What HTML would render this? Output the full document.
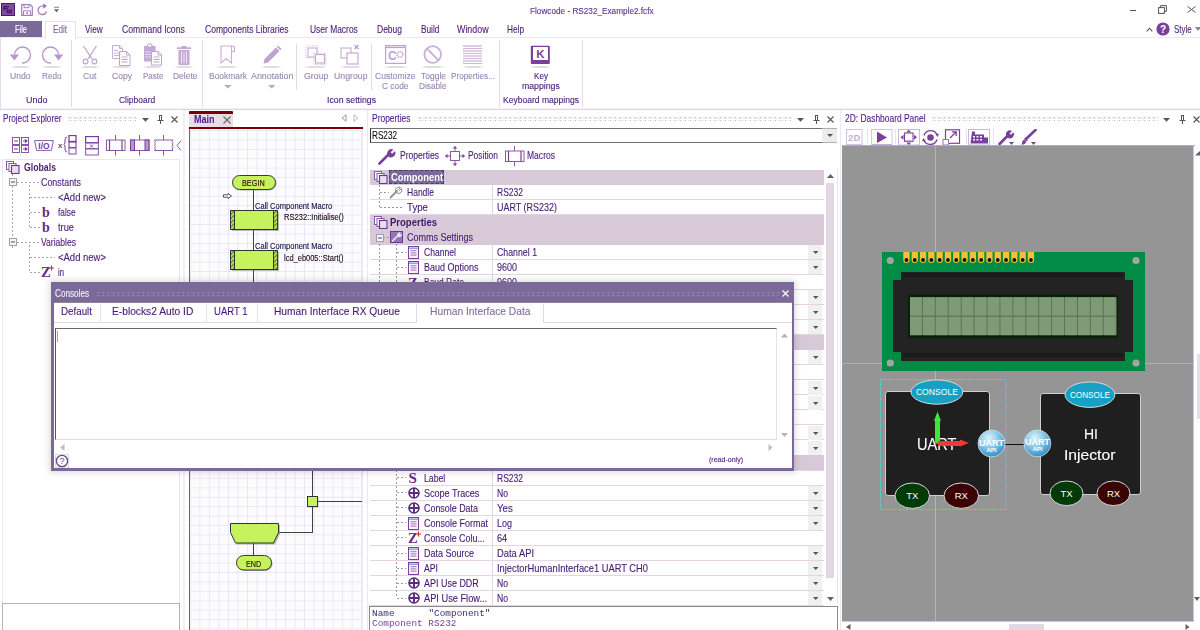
<!DOCTYPE html><html><head><meta charset="utf-8"><style>
html,body{margin:0;padding:0;width:1200px;height:630px;overflow:hidden;background:#fff;position:relative;font-family:"Liberation Sans", sans-serif}
.t{position:absolute;white-space:nowrap;line-height:1;transform-origin:0 0;-webkit-text-stroke:0.12px currentColor}
.r{position:absolute;box-sizing:border-box}
</style></head><body>
<svg class="r" style="left:1px;top:3px" width="14" height="13" viewBox="0 0 14 13"><rect x="0.5" y="0.5" width="13" height="12" fill="#7d4f9e" stroke="#4e1470"/><path d="M3 3.5h5M3 3.5v4M3 5.5h4M6 9.5h5M6 7.5v2M6 7.5h5" stroke="#4e1470" stroke-width="1.3" fill="none"/></svg>
<svg class="r" style="left:21px;top:4px" width="12" height="12" viewBox="0 0 12 12"><path d="M0.7 0.7h8.5l2.1 2.1v8.5h-10.6z" fill="none" stroke="#a87cc0" stroke-width="1.2"/><path d="M3 0.7v3h5v-3M2.5 11.3v-4.5h7v4.5" fill="none" stroke="#a87cc0" stroke-width="1"/><rect x="5" y="8" width="2" height="2" fill="#c0a0d0"/></svg>
<svg class="r" style="left:37px;top:3px" width="12" height="13" viewBox="0 0 12 13"><path d="M9.5 8.5A4.3 4.3 0 1 1 6.5 3.2" fill="none" stroke="#a87cc0" stroke-width="1.3"/><path d="M6.3 0.5l3.5 2.6-3.5 2.6z" fill="#9a64b4"/></svg>
<svg class="r" style="left:53px;top:6px" width="7" height="7" viewBox="0 0 7 7"><path d="M1 1.3h5" stroke="#777" stroke-width="0.9"/><path d="M0.8 3.3h5.4l-2.7 3z" fill="#666"/></svg>
<div class="t" style="transform:scaleX(0.965);left:529.5px;top:6.80px;font-size:8.5px;color:#5b3590;font-weight:normal;font-family:'Liberation Sans', sans-serif;">Flowcode - RS232_Example2.fcfx</div>
<div class="r" style="left:1129.5px;top:10.2px;width:6px;height:1.2px;background:#555;"></div>
<svg class="r" style="left:1158px;top:5px" width="9" height="9" viewBox="0 0 9 9"><rect x="0.6" y="2.6" width="5.8" height="5.8" fill="#fff" stroke="#555" stroke-width="1"/><path d="M2.6 2.6v-2h5.8v5.8h-2" fill="none" stroke="#555" stroke-width="1"/></svg>
<svg class="r" style="left:1187px;top:5.5px" width="9" height="7" viewBox="0 0 9 7"><path d="M0.5 0.5l8 6M8.5 0.5l-8 6" stroke="#555" stroke-width="1"/></svg>
<div class="r" style="left:0px;top:21px;width:42px;height:16.5px;background:#7b6a99;"></div>
<div class="t" style="transform:scaleX(0.709);left:15.4px;top:24.11px;font-size:10.5px;color:#fff;font-weight:normal;font-family:'Liberation Sans', sans-serif;">File</div>
<div class="t" style="transform:scaleX(0.780);left:85px;top:24.11px;font-size:10.5px;color:#4c1c7c;font-weight:normal;font-family:'Liberation Sans', sans-serif;">View</div>
<div class="t" style="transform:scaleX(0.821);left:121.6px;top:24.11px;font-size:10.5px;color:#4c1c7c;font-weight:normal;font-family:'Liberation Sans', sans-serif;">Command Icons</div>
<div class="t" style="transform:scaleX(0.814);left:205.4px;top:24.11px;font-size:10.5px;color:#4c1c7c;font-weight:normal;font-family:'Liberation Sans', sans-serif;">Components Libraries</div>
<div class="t" style="transform:scaleX(0.803);left:309.6px;top:24.11px;font-size:10.5px;color:#4c1c7c;font-weight:normal;font-family:'Liberation Sans', sans-serif;">User Macros</div>
<div class="t" style="transform:scaleX(0.808);left:377px;top:24.11px;font-size:10.5px;color:#4c1c7c;font-weight:normal;font-family:'Liberation Sans', sans-serif;">Debug</div>
<div class="t" style="transform:scaleX(0.788);left:420.6px;top:24.11px;font-size:10.5px;color:#4c1c7c;font-weight:normal;font-family:'Liberation Sans', sans-serif;">Build</div>
<div class="t" style="transform:scaleX(0.846);left:457.4px;top:24.11px;font-size:10.5px;color:#4c1c7c;font-weight:normal;font-family:'Liberation Sans', sans-serif;">Window</div>
<div class="t" style="transform:scaleX(0.787);left:507px;top:24.11px;font-size:10.5px;color:#4c1c7c;font-weight:normal;font-family:'Liberation Sans', sans-serif;">Help</div>
<svg class="r" style="left:1146px;top:26.5px" width="7" height="5" viewBox="0 0 7 5"><path d="M0.7 4.3L3.5 1.2 6.3 4.3" fill="none" stroke="#555" stroke-width="1.1"/></svg>
<svg class="r" style="left:1155.5px;top:21.5px" width="14" height="14" viewBox="0 0 14 14"><circle cx="7" cy="7" r="6.6" fill="#7b3f9b"/><text x="7" y="11" font-size="10" font-weight="bold" text-anchor="middle" fill="#fff" font-family="Liberation Sans">?</text></svg>
<div class="t" style="transform:scaleX(0.750);left:1174px;top:24.11px;font-size:10.5px;color:#4c1c7c;font-weight:normal;font-family:'Liberation Sans', sans-serif;">Style</div>
<svg class="r" style="left:1195px;top:27px" width="5" height="5" viewBox="0 0 5 5"><path d="M0 0h6l-3 4z" fill="#888"/></svg>
<div class="r" style="left:0px;top:37px;width:1200px;height:1px;background:#ede8ef;"></div>
<div class="r" style="left:0px;top:109px;width:1200px;height:1px;background:#e0d4e4;"></div>
<div class="r" style="left:0px;top:108px;width:1200px;height:1px;background:#f4f0f5;"></div>
<div class="r" style="left:0px;top:37px;width:1px;height:72px;background:#e6dee9;"></div>
<div class="r" style="left:44.5px;top:21px;width:31px;height:17.5px;background:#fff;border:1px solid #e8e0ec;border-bottom:none"></div>
<div class="t" style="transform:scaleX(0.774);left:52.9px;top:24.11px;font-size:10.5px;color:#7a6a9a;font-weight:normal;font-family:'Liberation Sans', sans-serif;">Edit</div>
<div class="r" style="left:70.5px;top:39.5px;width:1px;height:67px;background:#e4dae8;"></div>
<div class="r" style="left:202.4px;top:39.5px;width:1px;height:67px;background:#e4dae8;"></div>
<div class="r" style="left:499.3px;top:39.5px;width:1px;height:67px;background:#e4dae8;"></div>
<div class="r" style="left:581.7px;top:39.5px;width:1px;height:67px;background:#e4dae8;"></div>
<div class="r" style="left:296.4px;top:44px;width:1px;height:46px;background:#e4dae8;"></div>
<div class="r" style="left:370.5px;top:44px;width:1px;height:46px;background:#e4dae8;"></div>
<svg class="r" style="left:8px;top:45px" width="24" height="20" viewBox="0 0 24 20"><path d="M14 18A8 8 0 1 0 6.5 9.5" fill="none" stroke="#b898cc" stroke-width="1.4"/><path d="M1.8 9.5h9.2l-4.6 6z" fill="#b898cc"/></svg>
<svg class="r" style="left:40.8px;top:45px" width="24" height="20" viewBox="0 0 24 20"><path d="M10 18A8 8 0 1 1 17.5 9.5" fill="none" stroke="#b898cc" stroke-width="1.4"/><path d="M13 9.5h9.2l-4.6 6z" fill="#b898cc"/></svg>
<div class="r" style="left:10.5px;top:66px;width:20.5px;height:2px;background:linear-gradient(90deg,rgba(200,200,200,0),rgba(200,200,200,.6) 25%,rgba(200,200,200,.6) 75%,rgba(200,200,200,0));border-radius:1px;filter:blur(.4px)"></div>
<div class="r" style="left:42px;top:66px;width:20px;height:2px;background:linear-gradient(90deg,rgba(200,200,200,0),rgba(200,200,200,.6) 25%,rgba(200,200,200,.6) 75%,rgba(200,200,200,0));border-radius:1px;filter:blur(.4px)"></div>
<div class="t" style="transform:scaleX(1.013);left:10.4px;top:71.80px;font-size:8.5px;color:#9a88b4;font-weight:normal;font-family:'Liberation Sans', sans-serif;">Undo</div>
<div class="t" style="transform:scaleX(0.959);left:42px;top:71.80px;font-size:8.5px;color:#9a88b4;font-weight:normal;font-family:'Liberation Sans', sans-serif;">Redo</div>
<div class="t" style="transform:scaleX(1.058);left:25.5px;top:95.80px;font-size:8.5px;color:#4c1c7c;font-weight:normal;font-family:'Liberation Sans', sans-serif;">Undo</div>
<svg class="r" style="left:81px;top:45px" width="18" height="21" viewBox="0 0 18 21"><path d="M2.5 1L11 14M15.5 1L7 14" fill="none" stroke="#c0a2d2" stroke-width="1.3"/><circle cx="4.5" cy="16.5" r="2.4" fill="none" stroke="#c0a2d2" stroke-width="1.1"/><circle cx="13.5" cy="16.5" r="2.4" fill="none" stroke="#c0a2d2" stroke-width="1.1"/></svg>
<svg class="r" style="left:110px;top:44px" width="22" height="23" viewBox="0 0 22 23"><path d="M2.5 1.5h7l3 3v10h-10z" fill="#fff" stroke="#c8aed8" stroke-width="1"/><path d="M9.5 1.5v3h3" fill="none" stroke="#c8aed8" stroke-width="1"/><path d="M4 6.5h4M4 9h5M4 11.5h5" stroke="#cbb3da" stroke-width="1"/><path d="M9.5 7.5h7l3.5 3.5v10.5h-10.5z" fill="#fff" stroke="#c0a2d2" stroke-width="1"/><path d="M16.5 7.5v3.5h3.5" fill="none" stroke="#c0a2d2" stroke-width="1"/><path d="M11.5 13h6M11.5 15.5h6M11.5 18h6" stroke="#c0a2d2" stroke-width="1"/></svg>
<svg class="r" style="left:142px;top:43px" width="22" height="24" viewBox="0 0 22 24"><rect x="2" y="3" width="11.5" height="15.5" fill="#c4a8d6"/><rect x="5.5" y="1" width="4.5" height="3" rx="1" fill="#fff" stroke="#c0a2d2" stroke-width="1"/><path d="M3 9h9.5M3 11.5h9.5M3 14h6.5" stroke="#e8dcf0" stroke-width="1"/><path d="M9.5 8.5h6.5l3.5 3.5v10h-10z" fill="#fff" stroke="#c0a2d2" stroke-width="1"/><path d="M16 8.5v3.5h3.5" fill="none" stroke="#c0a2d2" stroke-width="1"/><path d="M11.5 14h6M11.5 16.5h6M11.5 19h6" stroke="#c0a2d2" stroke-width="1"/></svg>
<svg class="r" style="left:176px;top:45px" width="16" height="21" viewBox="0 0 16 21"><path d="M1 3.2h14" stroke="#c4a8d6" stroke-width="1.8"/><rect x="5.5" y="1" width="5" height="2" fill="#c4a8d6"/><path d="M2.5 5h11v14q0 1-1 1h-9q-1 0-1-1z" fill="#c4a8d6"/><path d="M5.5 6.5v12M8 6.5v12M10.5 6.5v12" stroke="#f0e8f4" stroke-width="1"/></svg>
<div class="r" style="left:80px;top:66px;width:20px;height:2px;background:linear-gradient(90deg,rgba(200,200,200,0),rgba(200,200,200,.6) 25%,rgba(200,200,200,.6) 75%,rgba(200,200,200,0));border-radius:1px;filter:blur(.4px)"></div>
<div class="r" style="left:111px;top:66px;width:21px;height:2px;background:linear-gradient(90deg,rgba(200,200,200,0),rgba(200,200,200,.6) 25%,rgba(200,200,200,.6) 75%,rgba(200,200,200,0));border-radius:1px;filter:blur(.4px)"></div>
<div class="r" style="left:143px;top:66px;width:20px;height:2px;background:linear-gradient(90deg,rgba(200,200,200,0),rgba(200,200,200,.6) 25%,rgba(200,200,200,.6) 75%,rgba(200,200,200,0));border-radius:1px;filter:blur(.4px)"></div>
<div class="r" style="left:174px;top:66px;width:20px;height:2px;background:linear-gradient(90deg,rgba(200,200,200,0),rgba(200,200,200,.6) 25%,rgba(200,200,200,.6) 75%,rgba(200,200,200,0));border-radius:1px;filter:blur(.4px)"></div>
<div class="t" style="transform:scaleX(1.005);left:83px;top:71.80px;font-size:8.5px;color:#9a88b4;font-weight:normal;font-family:'Liberation Sans', sans-serif;">Cut</div>
<div class="t" style="transform:scaleX(1.008);left:112px;top:71.80px;font-size:8.5px;color:#9a88b4;font-weight:normal;font-family:'Liberation Sans', sans-serif;">Copy</div>
<div class="t" style="transform:scaleX(0.943);left:142.8px;top:71.80px;font-size:8.5px;color:#9a88b4;font-weight:normal;font-family:'Liberation Sans', sans-serif;">Paste</div>
<div class="t" style="transform:scaleX(0.997);left:172.5px;top:71.80px;font-size:8.5px;color:#9a88b4;font-weight:normal;font-family:'Liberation Sans', sans-serif;">Delete</div>
<div class="t" style="transform:scaleX(0.995);left:118.8px;top:95.80px;font-size:8.5px;color:#4c1c7c;font-weight:normal;font-family:'Liberation Sans', sans-serif;">Clipboard</div>
<svg class="r" style="left:219px;top:45px" width="17" height="20" viewBox="0 0 17 20"><path d="M2 1h10.5v17l-5.25-4.5L2 18z" fill="none" stroke="#c8aed8" stroke-width="1.1"/><path d="M12.5 1q3 0 3 2.5v3h-3" fill="none" stroke="#c8aed8" stroke-width="1.1"/></svg>
<svg class="r" style="left:262px;top:45px" width="20" height="20" viewBox="0 0 20 20"><path d="M1.5 18.5l1-4.5 11.5-11.5 3.5 3.5-11.5 11.5z" fill="#c0a2d2"/><path d="M14.8 1.7l1.2-1.2 3.5 3.5-1.2 1.2z" fill="#c0a2d2"/></svg>
<div class="r" style="left:216px;top:66px;width:22px;height:2px;background:linear-gradient(90deg,rgba(200,200,200,0),rgba(200,200,200,.6) 25%,rgba(200,200,200,.6) 75%,rgba(200,200,200,0));border-radius:1px;filter:blur(.4px)"></div>
<div class="r" style="left:261px;top:66px;width:21px;height:2px;background:linear-gradient(90deg,rgba(200,200,200,0),rgba(200,200,200,.6) 25%,rgba(200,200,200,.6) 75%,rgba(200,200,200,0));border-radius:1px;filter:blur(.4px)"></div>
<div class="t" style="transform:scaleX(0.993);left:208.7px;top:71.80px;font-size:8.5px;color:#9a88b4;font-weight:normal;font-family:'Liberation Sans', sans-serif;">Bookmark</div>
<div class="t" style="transform:scaleX(1.045);left:250.6px;top:71.80px;font-size:8.5px;color:#9a88b4;font-weight:normal;font-family:'Liberation Sans', sans-serif;">Annotation</div>
<svg class="r" style="left:224px;top:85.3px" width="8" height="4" viewBox="0 0 8 4"><path d="M0 0h7.5l-3.75 3.5z" fill="#b0b0b0"/></svg>
<svg class="r" style="left:268px;top:85.3px" width="8" height="4" viewBox="0 0 8 4"><path d="M0 0h7.5l-3.75 3.5z" fill="#b0b0b0"/></svg>
<svg class="r" style="left:305px;top:45px" width="22" height="20" viewBox="0 0 22 20"><rect x="0.8" y="0.8" width="12" height="12" fill="none" stroke="#d2bede" stroke-width="1" stroke-dasharray="1 1"/><rect x="3" y="3" width="9" height="9" fill="none" stroke="#c8aed8" stroke-width="1.1"/><rect x="8.8" y="8" width="12" height="11.5" fill="none" stroke="#d2bede" stroke-width="1" stroke-dasharray="1 1"/><rect x="10.5" y="9.5" width="9" height="8.5" fill="#fff" stroke="#c0a2d2" stroke-width="1.1"/></svg>
<svg class="r" style="left:340px;top:44px" width="22" height="21" viewBox="0 0 22 21"><rect x="1" y="4" width="10" height="10" fill="none" stroke="#c8aed8" stroke-width="1.1"/><rect x="7" y="9" width="11" height="11" fill="#fff" stroke="#c0a2d2" stroke-width="1.1"/><path d="M14.5 1l4 4M18.5 1l-4 4" stroke="#b898cc" stroke-width="1.2"/></svg>
<div class="r" style="left:304px;top:66px;width:23px;height:2px;background:linear-gradient(90deg,rgba(200,200,200,0),rgba(200,200,200,.6) 25%,rgba(200,200,200,.6) 75%,rgba(200,200,200,0));border-radius:1px;filter:blur(.4px)"></div>
<div class="r" style="left:340px;top:66px;width:22px;height:2px;background:linear-gradient(90deg,rgba(200,200,200,0),rgba(200,200,200,.6) 25%,rgba(200,200,200,.6) 75%,rgba(200,200,200,0));border-radius:1px;filter:blur(.4px)"></div>
<div class="t" style="transform:scaleX(1.037);left:303.6px;top:71.80px;font-size:8.5px;color:#9a88b4;font-weight:normal;font-family:'Liberation Sans', sans-serif;">Group</div>
<div class="t" style="transform:scaleX(1.027);left:333.5px;top:71.80px;font-size:8.5px;color:#9a88b4;font-weight:normal;font-family:'Liberation Sans', sans-serif;">Ungroup</div>
<div class="t" style="transform:scaleX(1.027);left:327px;top:95.80px;font-size:8.5px;color:#4c1c7c;font-weight:normal;font-family:'Liberation Sans', sans-serif;">Icon settings</div>
<svg class="r" style="left:385px;top:45px" width="22" height="19" viewBox="0 0 22 19"><rect x="0.6" y="0.6" width="20" height="17.8" fill="#fff" stroke="#c0a2d2" stroke-width="1.2"/><path d="M0.6 2.4h20" stroke="#c0a2d2" stroke-width="1.4"/><text x="3" y="14.5" font-size="12" font-weight="bold" fill="#c0a2d2" font-family="Liberation Sans">C</text><circle cx="15" cy="9.5" r="2.8" fill="none" stroke="#c0a2d2" stroke-width="1.6" stroke-dasharray="1.1 .7"/></svg>
<svg class="r" style="left:422px;top:45px" width="22" height="19" viewBox="0 0 22 19"><circle cx="10.7" cy="9.5" r="8.3" fill="none" stroke="#c8aed8" stroke-width="1.8"/><path d="M5 3.6l11.5 11.8" stroke="#c8aed8" stroke-width="1.8"/></svg>
<svg class="r" style="left:463px;top:45px" width="20" height="20" viewBox="0 0 20 20"><path d="M0 1h19" stroke="#c8aed8" stroke-width="1.2"/><path d="M0 3.5h19" stroke="#c8aed8" stroke-width="0.9"/><path d="M0 6h19" stroke="#c8aed8" stroke-width="1.2"/><path d="M0 8.5h19" stroke="#c8aed8" stroke-width="0.9"/><path d="M0 11h19" stroke="#c8aed8" stroke-width="1.2"/><path d="M0 13.5h19" stroke="#c8aed8" stroke-width="0.9"/><path d="M0 16h19" stroke="#c8aed8" stroke-width="1.2"/><path d="M0 18.5h19" stroke="#c8aed8" stroke-width="0.9"/></svg>
<div class="r" style="left:384px;top:66px;width:24px;height:2px;background:linear-gradient(90deg,rgba(200,200,200,0),rgba(200,200,200,.6) 25%,rgba(200,200,200,.6) 75%,rgba(200,200,200,0));border-radius:1px;filter:blur(.4px)"></div>
<div class="r" style="left:421px;top:66px;width:24px;height:2px;background:linear-gradient(90deg,rgba(200,200,200,0),rgba(200,200,200,.6) 25%,rgba(200,200,200,.6) 75%,rgba(200,200,200,0));border-radius:1px;filter:blur(.4px)"></div>
<div class="r" style="left:462px;top:66px;width:22px;height:2px;background:linear-gradient(90deg,rgba(200,200,200,0),rgba(200,200,200,.6) 25%,rgba(200,200,200,.6) 75%,rgba(200,200,200,0));border-radius:1px;filter:blur(.4px)"></div>
<div class="t" style="transform:scaleX(1.009);left:375px;top:71.80px;font-size:8.5px;color:#9a88b4;font-weight:normal;font-family:'Liberation Sans', sans-serif;">Customize</div>
<div class="t" style="transform:scaleX(0.984);left:382.3px;top:81.80px;font-size:8.5px;color:#9a88b4;font-weight:normal;font-family:'Liberation Sans', sans-serif;">C code</div>
<div class="t" style="transform:scaleX(0.998);left:421px;top:71.80px;font-size:8.5px;color:#9a88b4;font-weight:normal;font-family:'Liberation Sans', sans-serif;">Toggle</div>
<div class="t" style="transform:scaleX(0.970);left:419px;top:81.80px;font-size:8.5px;color:#9a88b4;font-weight:normal;font-family:'Liberation Sans', sans-serif;">Disable</div>
<div class="t" style="transform:scaleX(0.960);left:451px;top:71.80px;font-size:8.5px;color:#9a88b4;font-weight:normal;font-family:'Liberation Sans', sans-serif;">Properties...</div>
<svg class="r" style="left:530px;top:45px" width="21" height="20" viewBox="0 0 21 20"><rect x="0.8" y="0.8" width="19" height="18.2" rx="1" fill="#7b3f9b"/><rect x="3" y="2" width="15" height="13" fill="#fff"/><text x="10.5" y="13" font-size="11.5" font-weight="bold" text-anchor="middle" fill="#7b3f9b" font-family="Liberation Sans">K</text></svg>
<div class="r" style="left:530px;top:66px;width:21px;height:2px;background:linear-gradient(90deg,rgba(200,200,200,0),rgba(200,200,200,.6) 25%,rgba(200,200,200,.6) 75%,rgba(200,200,200,0));border-radius:1px;filter:blur(.4px)"></div>
<div class="t" style="transform:scaleX(0.955);left:534.3px;top:71.80px;font-size:8.5px;color:#4c1c7c;font-weight:normal;font-family:'Liberation Sans', sans-serif;">Key</div>
<div class="t" style="transform:scaleX(1.026);left:522px;top:81.80px;font-size:8.5px;color:#4c1c7c;font-weight:normal;font-family:'Liberation Sans', sans-serif;">mappings</div>
<div class="t" style="transform:scaleX(1.005);left:502.8px;top:95.80px;font-size:8.5px;color:#4c1c7c;font-weight:normal;font-family:'Liberation Sans', sans-serif;">Keyboard mappings</div>
<div class="r" style="left:183px;top:110px;width:2px;height:520px;background:#f3eff4;"></div>
<div class="r" style="left:367px;top:110px;width:1px;height:520px;background:#ece6ee;"></div>
<div class="r" style="left:840px;top:110px;width:1px;height:520px;background:#ece6ee;"></div>
<div class="t" style="transform:scaleX(0.783);left:3px;top:113.11px;font-size:10.5px;color:#56208a;font-weight:normal;font-family:'Liberation Sans', sans-serif;">Project Explorer</div>
<svg class="r" style="left:67px;top:117px" width="70" height="5" viewBox="0 0 70 5"><defs><pattern id="g1" width="5" height="5" patternUnits="userSpaceOnUse"><rect x="1" y="0" width="1" height="1" fill="#d8d8d8"/><rect x="3" y="0" width="1" height="1" fill="#a8a8a8"/><rect x="2" y="1" width="1" height="1" fill="#dcdcdc"/><rect x="4" y="1" width="1" height="1" fill="#e4e4e4"/><rect x="1" y="3" width="1" height="1" fill="#e0e0e0"/><rect x="3" y="3" width="1" height="1" fill="#b8b8b8"/></pattern></defs><rect width="70" height="5" fill="url(#g1)"/></svg>
<svg class="r" style="left:142px;top:118px" width="7" height="4" viewBox="0 0 7 4"><path d="M0 0h7l-3.5 3.8z" fill="#555"/></svg>
<svg class="r" style="left:157px;top:115px" width="7" height="9" viewBox="0 0 7 9"><path d="M2 0.5h3M2.5 0.5v5M4.5 0.5v5M0.5 5.5h6M3.5 5.5v3.5" stroke="#555" stroke-width="1" fill="none"/></svg>
<svg class="r" style="left:171px;top:116px" width="7" height="7" viewBox="0 0 7 7"><path d="M0.5 0.5l6 6M6.5 0.5l-6 6" stroke="#555" stroke-width="1.1"/></svg>
<svg class="r" style="left:12px;top:137px" width="17" height="16" viewBox="0 0 17 16"><g fill="none" stroke="#8a5aaa" stroke-width="1"><rect x="0.5" y="0.5" width="7" height="7"/><rect x="9.5" y="0.5" width="7" height="7"/><rect x="0.5" y="8.5" width="7" height="7"/><rect x="9.5" y="8.5" width="7" height="7"/></g><path d="M2 4h4M11 4h4M13 2.5l2 1.5-2 1.5M2 12h4M11 12h4M13 10.5l2 1.5-2 1.5" stroke="#7b3f9b" stroke-width="1.1" fill="none"/></svg>
<svg class="r" style="left:34px;top:140px" width="20" height="11" viewBox="0 0 20 11"><path d="M0.6 0.6h18.8l-2 9.8h-14.8z" fill="none" stroke="#8a5aaa" stroke-width="1"/><text x="10" y="8.8" font-size="8.5" font-weight="bold" text-anchor="middle" fill="#7b3f9b" font-family="Liberation Sans">I/O</text></svg>
<svg class="r" style="left:58px;top:135px" width="20" height="20" viewBox="0 0 20 20"><text x="0" y="13" font-size="8" font-weight="bold" fill="#7b3f9b" font-family="Liberation Sans">x</text><path d="M9 2q-2 0-2 3v3l-1 1.5 1 1.5v3q0 3 2 3" fill="none" stroke="#7b3f9b" stroke-width="1"/><rect x="11" y="0.5" width="7" height="6" fill="none" stroke="#7b3f9b" stroke-width="1.3"/><rect x="11" y="7" width="7" height="5.5" fill="none" stroke="#7b3f9b" stroke-width="1.1"/><rect x="11" y="13" width="7" height="6" fill="none" stroke="#8a5aaa" stroke-width="1.1"/></svg>
<svg class="r" style="left:85px;top:136px" width="14" height="20" viewBox="0 0 14 20"><rect x="0.6" y="0.6" width="12.8" height="6" fill="none" stroke="#7b3f9b" stroke-width="1.2"/><rect x="0.6" y="7" width="12.8" height="5.5" fill="none" stroke="#8a5aaa" stroke-width="1"/><path d="M5 8.5l3 3M8 8.5l-3 3" stroke="#7b3f9b" stroke-width=".9"/><rect x="0.6" y="13" width="12.8" height="6" fill="none" stroke="#8a5aaa" stroke-width="1"/></svg>
<svg class="r" style="left:106px;top:135px" width="20" height="21" viewBox="0 0 20 21"><path d="M9.5 0v5M9.5 15.5v5" stroke="#8a5aaa" stroke-width="1"/><rect x="0.5" y="5" width="18.5" height="10.5" fill="none" stroke="#8a5aaa" stroke-width="1"/><path d="M3.5 5v10.5M16 5v10.5" stroke="#7b3f9b" stroke-width="1.2"/></svg>
<svg class="r" style="left:130px;top:135px" width="20" height="21" viewBox="0 0 20 21"><path d="M9.5 0v5M9.5 15.5v5" stroke="#8a5aaa" stroke-width="1"/><rect x="0.5" y="5" width="18.5" height="10.5" fill="none" stroke="#8a5aaa" stroke-width="1"/><rect x="0.5" y="5" width="4" height="10.5" fill="#b898cc" stroke="#7b3f9b" stroke-width="1"/><rect x="15" y="5" width="4" height="10.5" fill="#b898cc" stroke="#7b3f9b" stroke-width="1"/></svg>
<svg class="r" style="left:154px;top:135px" width="20" height="21" viewBox="0 0 20 21"><path d="M9.5 0v5M9.5 15.5v5" stroke="#8a5aaa" stroke-width="1"/><path d="M0.5 5h18.5M0.5 15.5h18.5M0.5 5q2 1.3 0 2.6q2 1.3 0 2.6q2 1.3 0 2.6q2 1.3 0 2.6M19 5q-2 1.3 0 2.6q-2 1.3 0 2.6q-2 1.3 0 2.6q-2 1.3 0 2.6" fill="none" stroke="#8a5aaa" stroke-width="1"/></svg>
<svg class="r" style="left:176px;top:140px" width="6" height="11" viewBox="0 0 6 11"><path d="M5 0.5L1 5.5 5 10.5" fill="none" stroke="#8a5aaa" stroke-width="1"/></svg>
<div class="r" style="left:2px;top:159px;width:178px;height:1px;background:#ebe6ec;"></div>
<div class="r" style="left:2px;top:159px;width:1px;height:444px;background:#ebe6ec;"></div>
<div class="r" style="left:179px;top:159px;width:1px;height:444px;background:#ebe6ec;"></div>
<div class="r" style="left:2px;top:603px;width:178px;height:27px;background:#fff;border:1px solid #b8b0bc;border-bottom:none"></div>
<svg class="r" style="left:6px;top:161px" width="14" height="13" viewBox="0 0 14 13"><rect x="0.5" y="0.5" width="7" height="8" fill="#fff" stroke="#8a5aaa" stroke-width="1"/><rect x="3" y="2.5" width="7" height="8" fill="#fff" stroke="#8a5aaa" stroke-width="1"/><rect x="5.5" y="4.5" width="7.5" height="8" fill="#eadcf2" stroke="#6a3590" stroke-width="1.1"/></svg>
<div class="t" style="transform:scaleX(0.831);left:24px;top:162.11px;font-size:10.5px;color:#4a1f70;font-weight:bold;font-family:'Liberation Sans', sans-serif;-webkit-text-stroke:0;">Globals</div>
<div class="r" style="left:12px;top:174px;width:1px;height:66px;background:repeating-linear-gradient(180deg,#a8a8a8 0 2px,transparent 2px 4px);"></div>
<div class="r" style="left:12px;top:246px;width:1px;height:2px;background:repeating-linear-gradient(180deg,#a8a8a8 0 2px,transparent 2px 4px);"></div>
<svg class="r" style="left:9px;top:178px" width="8" height="8" viewBox="0 0 8 8"><rect x="0.5" y="0.5" width="7" height="7" fill="#f4f4f4" stroke="#a0a0a0" stroke-width="1"/><path d="M2 4h4" stroke="#3050a0" stroke-width="1"/></svg>
<svg class="r" style="left:9px;top:238px" width="8" height="8" viewBox="0 0 8 8"><rect x="0.5" y="0.5" width="7" height="7" fill="#f4f4f4" stroke="#a0a0a0" stroke-width="1"/><path d="M2 4h4" stroke="#3050a0" stroke-width="1"/></svg>
<div class="r" style="left:17px;top:182px;width:22px;height:1px;background:repeating-linear-gradient(90deg,#a8a8a8 0 2px,transparent 2px 4px);"></div>
<div class="r" style="left:17px;top:242px;width:22px;height:1px;background:repeating-linear-gradient(90deg,#a8a8a8 0 2px,transparent 2px 4px);"></div>
<div class="r" style="left:29px;top:185px;width:1px;height:43px;background:repeating-linear-gradient(180deg,#a8a8a8 0 2px,transparent 2px 4px);"></div>
<div class="r" style="left:29px;top:245px;width:1px;height:28px;background:repeating-linear-gradient(180deg,#a8a8a8 0 2px,transparent 2px 4px);"></div>
<div class="r" style="left:30px;top:197px;width:25px;height:1px;background:repeating-linear-gradient(90deg,#a8a8a8 0 2px,transparent 2px 4px);"></div>
<div class="t" style="transform:scaleX(0.903);left:57.5px;top:192.11px;font-size:10.5px;color:#4a1c78;font-weight:normal;font-family:'Liberation Sans', sans-serif;">&lt;Add new&gt;</div>
<div class="r" style="left:30px;top:212px;width:10px;height:1px;background:repeating-linear-gradient(90deg,#a8a8a8 0 2px,transparent 2px 4px);"></div>
<svg class="r" style="left:42px;top:205px" width="10" height="13" viewBox="0 0 10 13"><text x="0" y="11.5" font-size="14" font-weight="bold" fill="#642c8c" font-family="Liberation Serif">b</text></svg>
<div class="t" style="transform:scaleX(0.789);left:57.5px;top:207.11px;font-size:10.5px;color:#4a1c78;font-weight:normal;font-family:'Liberation Sans', sans-serif;">false</div>
<div class="r" style="left:30px;top:227px;width:10px;height:1px;background:repeating-linear-gradient(90deg,#a8a8a8 0 2px,transparent 2px 4px);"></div>
<svg class="r" style="left:42px;top:220px" width="10" height="13" viewBox="0 0 10 13"><text x="0" y="11.5" font-size="14" font-weight="bold" fill="#642c8c" font-family="Liberation Serif">b</text></svg>
<div class="t" style="transform:scaleX(0.884);left:57.5px;top:222.11px;font-size:10.5px;color:#4a1c78;font-weight:normal;font-family:'Liberation Sans', sans-serif;">true</div>
<div class="r" style="left:30px;top:257px;width:25px;height:1px;background:repeating-linear-gradient(90deg,#a8a8a8 0 2px,transparent 2px 4px);"></div>
<div class="t" style="transform:scaleX(0.903);left:57.5px;top:252.11px;font-size:10.5px;color:#4a1c78;font-weight:normal;font-family:'Liberation Sans', sans-serif;">&lt;Add new&gt;</div>
<div class="r" style="left:30px;top:272px;width:10px;height:1px;background:repeating-linear-gradient(90deg,#a8a8a8 0 2px,transparent 2px 4px);"></div>
<svg class="r" style="left:41px;top:265px" width="14" height="13" viewBox="0 0 14 13"><text x="0" y="12" font-size="14.5" font-weight="bold" fill="#642c8c" font-family="Liberation Serif">Z</text><path d="M10.5 0.5v5M8 3h5" stroke="#e02020" stroke-width="1.1"/></svg>
<div class="t" style="transform:scaleX(0.733);left:57.5px;top:267.11px;font-size:10.5px;color:#4a1c78;font-weight:normal;font-family:'Liberation Sans', sans-serif;">in</div>
<div class="t" style="transform:scaleX(0.846);left:40.5px;top:177.11px;font-size:10.5px;color:#4a1c78;font-weight:normal;font-family:'Liberation Sans', sans-serif;">Constants</div>
<div class="t" style="transform:scaleX(0.814);left:40.5px;top:237.11px;font-size:10.5px;color:#4a1c78;font-weight:normal;font-family:'Liberation Sans', sans-serif;">Variables</div>
<div class="r" style="left:189px;top:111px;width:44px;height:3px;background:#7a0000;border-radius:1px 1px 0 0"></div>
<div class="r" style="left:189px;top:114px;width:44px;height:13px;background:#e6dde6;"></div>
<div class="t" style="transform:scaleX(0.857);left:194px;top:114.11px;font-size:10.5px;color:#4a1585;font-weight:bold;font-family:'Liberation Sans', sans-serif;-webkit-text-stroke:0;">Main</div>
<svg class="r" style="left:222.5px;top:116px" width="8" height="8" viewBox="0 0 8 8"><path d="M0.5 0.5l7 7M7.5 0.5l-7 7" stroke="#666" stroke-width="1.1"/></svg>
<svg class="r" style="left:341px;top:114px" width="6" height="8" viewBox="0 0 6 8"><path d="M5 0.8v6.4L1 4z" fill="none" stroke="#999" stroke-width="1"/></svg>
<svg class="r" style="left:353px;top:114px" width="6" height="8" viewBox="0 0 6 8"><path d="M1 0.8v6.4L5 4z" fill="none" stroke="#bbb" stroke-width="1"/></svg>
<div class="r" style="left:189px;top:127px;width:174px;height:2.2px;background:#7a0000;"></div>
<div class="r" style="left:189px;top:129px;width:173px;height:501px;background:#fcfcfc;background-image:linear-gradient(90deg,#e9e8fa 1px,transparent 1px),linear-gradient(180deg,#e9e8fa 1px,transparent 1px);background-size:9.53px 9.41px;background-position:0.9px 1px"></div>
<div class="r" style="left:189px;top:129px;width:1.2px;height:501px;background:#6a6a6a;"></div>
<div class="r" style="left:361.5px;top:129px;width:1px;height:501px;background:#e8e8f0;"></div>
<div class="r" style="left:253px;top:189px;width:1px;height:93px;background:#404040;"></div>
<div class="r" style="left:253px;top:542px;width:1px;height:13px;background:#404040;"></div>
<svg class="r" style="left:232px;top:175px" width="47" height="18" viewBox="0 0 47 18"><rect x="1.5" y="1.5" width="43" height="14" rx="7.0" fill="#777" opacity=".55"/><rect x="0.5" y="0.5" width="43" height="14" rx="7.0" fill="#c6f25e" stroke="#3a3a3a" stroke-width="1"/></svg>
<div class="t" style="transform:scaleX(0.858);left:241.8px;top:178.80px;font-size:8.5px;color:#300808;font-weight:normal;font-family:'Liberation Sans', sans-serif;">BEGIN</div>
<svg class="r" style="left:223px;top:193px" width="9" height="6" viewBox="0 0 9 6"><path d="M0.5 1.8h4.5v-1.3l3.5 2.5-3.5 2.5v-1.3h-4.5z" fill="#fff" stroke="#444" stroke-width=".9"/></svg>
<svg class="r" style="left:230px;top:210px" width="50" height="22" viewBox="0 0 50 22"><rect x="2" y="2" width="47" height="19" fill="#777" opacity=".5"/><rect x="0.5" y="0.5" width="47" height="19" fill="#c6f25e" stroke="#333" stroke-width="1"/><defs><pattern id="h210" width="3" height="3" patternUnits="userSpaceOnUse" patternTransform="rotate(45)"><rect width="1.3" height="3" fill="#5a7a2a"/></pattern></defs><rect x="1" y="1" width="3.5" height="18" fill="url(#h210)"/><path d="M4.5 0.5v19M43.5 0.5v19" stroke="#333" stroke-width="1"/><rect x="44" y="1" width="3.5" height="18" fill="url(#h210)"/></svg>
<svg class="r" style="left:230px;top:250px" width="50" height="22" viewBox="0 0 50 22"><rect x="2" y="2" width="47" height="19" fill="#777" opacity=".5"/><rect x="0.5" y="0.5" width="47" height="19" fill="#c6f25e" stroke="#333" stroke-width="1"/><defs><pattern id="h250" width="3" height="3" patternUnits="userSpaceOnUse" patternTransform="rotate(45)"><rect width="1.3" height="3" fill="#5a7a2a"/></pattern></defs><rect x="1" y="1" width="3.5" height="18" fill="url(#h250)"/><path d="M4.5 0.5v19M43.5 0.5v19" stroke="#333" stroke-width="1"/><rect x="44" y="1" width="3.5" height="18" fill="url(#h250)"/></svg>
<div class="t" style="transform:scaleX(0.888);left:254.8px;top:201.80px;font-size:8.5px;color:#10104a;font-weight:normal;font-family:'Liberation Sans', sans-serif;">Call Component Macro</div>
<div class="t" style="transform:scaleX(0.891);left:283.7px;top:212.80px;font-size:8.5px;color:#1a0818;font-weight:normal;font-family:'Liberation Sans', sans-serif;">RS232::Initialise()</div>
<div class="t" style="transform:scaleX(0.888);left:254.8px;top:241.80px;font-size:8.5px;color:#10104a;font-weight:normal;font-family:'Liberation Sans', sans-serif;">Call Component Macro</div>
<div class="t" style="transform:scaleX(0.880);left:284px;top:253.80px;font-size:8.5px;color:#1a0818;font-weight:normal;font-family:'Liberation Sans', sans-serif;">lcd_eb005::Start()</div>
<div class="r" style="left:312px;top:282px;width:1px;height:251px;background:#404040;"></div>
<div class="r" style="left:317px;top:501px;width:45px;height:1px;background:#404040;"></div>
<svg class="r" style="left:307px;top:496px" width="12" height="12" viewBox="0 0 12 12"><rect x="1.5" y="1.5" width="10" height="10" fill="#777" opacity=".5"/><rect x="0.5" y="0.5" width="10" height="10" fill="#c6f25e" stroke="#333" stroke-width="1"/></svg>
<div class="r" style="left:276px;top:532px;width:37px;height:1px;background:#404040;"></div>
<svg class="r" style="left:229.5px;top:522.5px" width="52" height="23" viewBox="0 0 52 23"><path d="M2 2h48v9l-5 10.5h-38l-5-10.5z" fill="#777" opacity=".5"/><path d="M0.5 0.5h48v9l-5 10.5h-38l-5-10.5z" fill="#c6f25e" stroke="#333" stroke-width="1"/></svg>
<svg class="r" style="left:235.7px;top:555px" width="39" height="18.5" viewBox="0 0 39 18.5"><rect x="1.5" y="1.5" width="35" height="14.5" rx="7.25" fill="#777" opacity=".55"/><rect x="0.5" y="0.5" width="35" height="14.5" rx="7.25" fill="#c6f25e" stroke="#3a3a3a" stroke-width="1"/></svg>
<div class="t" style="transform:scaleX(0.847);left:245.8px;top:559.80px;font-size:8.5px;color:#201008;font-weight:normal;font-family:'Liberation Sans', sans-serif;">END</div>
<div class="t" style="transform:scaleX(0.804);left:372px;top:113.11px;font-size:10.5px;color:#56208a;font-weight:normal;font-family:'Liberation Sans', sans-serif;">Properties</div>
<svg class="r" style="left:417px;top:117px" width="375" height="5" viewBox="0 0 375 5"><defs><pattern id="g2" width="5" height="5" patternUnits="userSpaceOnUse"><rect x="1" y="0" width="1" height="1" fill="#d8d8d8"/><rect x="3" y="0" width="1" height="1" fill="#a8a8a8"/><rect x="2" y="1" width="1" height="1" fill="#dcdcdc"/><rect x="4" y="1" width="1" height="1" fill="#e4e4e4"/><rect x="1" y="3" width="1" height="1" fill="#e0e0e0"/><rect x="3" y="3" width="1" height="1" fill="#b8b8b8"/></pattern></defs><rect width="375" height="5" fill="url(#g2)"/></svg>
<svg class="r" style="left:797px;top:118px" width="7" height="4" viewBox="0 0 7 4"><path d="M0 0h7l-3.5 3.8z" fill="#555"/></svg>
<svg class="r" style="left:812.5px;top:115px" width="7" height="9" viewBox="0 0 7 9"><path d="M2 0.5h3M2.5 0.5v5M4.5 0.5v5M0.5 5.5h6M3.5 5.5v3.5" stroke="#555" stroke-width="1" fill="none"/></svg>
<svg class="r" style="left:826.5px;top:116px" width="7" height="7" viewBox="0 0 7 7"><path d="M0.5 0.5l6 6M6.5 0.5l-6 6" stroke="#555" stroke-width="1.1"/></svg>
<div class="r" style="left:370px;top:128px;width:453px;height:15px;background:#fff;border-top:1.2px solid #707070;border-left:1.2px solid #303030;border-bottom:1px solid #707070"></div>
<div class="r" style="left:822px;top:128px;width:15px;height:15px;background:#ececec;border-top:1px solid #b0b0b0;border-bottom:1px solid #b0b0b0"></div>
<svg class="r" style="left:826.5px;top:134px" width="7" height="4" viewBox="0 0 7 4"><path d="M0 0h6l-3 3z" fill="#555"/></svg>
<div class="t" style="transform:scaleX(0.779);left:371.5px;top:130.11px;font-size:10.5px;color:#111;font-weight:normal;font-family:'Liberation Sans', sans-serif;">RS232</div>
<svg class="r" style="left:378px;top:147px" width="19" height="18" viewBox="0 0 19 18"><path d="M1.5 16.5l9.5-9.5" stroke="#7b3f9b" stroke-width="2.6" stroke-linecap="round"/><path d="M9.5 8.5a4.5 4.5 0 0 1 6-6l-2.8 2.8 1.5 1.5 2.8-2.8a4.5 4.5 0 0 1-6 6z" fill="#7b3f9b"/></svg>
<div class="t" style="transform:scaleX(0.815);left:400px;top:150.11px;font-size:10.5px;color:#4c1c7c;font-weight:normal;font-family:'Liberation Sans', sans-serif;">Properties</div>
<svg class="r" style="left:444.5px;top:146px" width="20" height="20" viewBox="0 0 20 20"><rect x="5.5" y="5.5" width="9" height="9" fill="#fff" stroke="#8a5aaa" stroke-width="1"/><path d="M10 0.5v5M10 14.5v5M0.5 10h5M14.5 10h5" stroke="#8a5aaa" stroke-width="1"/><path d="M10 0l-2.2 2.5h4.4zM10 20l-2.2-2.5h4.4zM0 10l2.5-2.2v4.4zM20 10l-2.5-2.2v4.4z" fill="#7b3f9b"/></svg>
<div class="t" style="transform:scaleX(0.803);left:468px;top:150.11px;font-size:10.5px;color:#4c1c7c;font-weight:normal;font-family:'Liberation Sans', sans-serif;">Position</div>
<svg class="r" style="left:505px;top:146px" width="20" height="21" viewBox="0 0 20 21"><path d="M9.5 0v5M9.5 15.5v5" stroke="#8a5aaa" stroke-width="1"/><rect x="0.5" y="5" width="18.5" height="10.5" fill="none" stroke="#8a5aaa" stroke-width="1"/><path d="M3.5 5v10.5M16 5v10.5" stroke="#7b3f9b" stroke-width="1.2"/></svg>
<div class="t" style="transform:scaleX(0.813);left:527px;top:150.11px;font-size:10.5px;color:#4c1c7c;font-weight:normal;font-family:'Liberation Sans', sans-serif;">Macros</div>
<div class="r" style="left:370px;top:169px;width:454px;height:436px;background:#fff;"></div>
<div class="r" style="left:370px;top:183.8px;width:454px;height:0.9px;background:#e4d4e6;"></div>
<div class="r" style="left:370px;top:198.84px;width:454px;height:0.9px;background:#e4d4e6;"></div>
<div class="r" style="left:370px;top:213.88px;width:454px;height:0.9px;background:#e4d4e6;"></div>
<div class="r" style="left:370px;top:228.92000000000002px;width:454px;height:0.9px;background:#e4d4e6;"></div>
<div class="r" style="left:370px;top:243.96px;width:454px;height:0.9px;background:#e4d4e6;"></div>
<div class="r" style="left:370px;top:259.0px;width:454px;height:0.9px;background:#e4d4e6;"></div>
<div class="r" style="left:370px;top:274.04px;width:454px;height:0.9px;background:#e4d4e6;"></div>
<div class="r" style="left:370px;top:289.08px;width:454px;height:0.9px;background:#e4d4e6;"></div>
<div class="r" style="left:370px;top:304.12px;width:454px;height:0.9px;background:#e4d4e6;"></div>
<div class="r" style="left:370px;top:319.16px;width:454px;height:0.9px;background:#e4d4e6;"></div>
<div class="r" style="left:370px;top:334.2px;width:454px;height:0.9px;background:#e4d4e6;"></div>
<div class="r" style="left:370px;top:349.24px;width:454px;height:0.9px;background:#e4d4e6;"></div>
<div class="r" style="left:370px;top:364.28000000000003px;width:454px;height:0.9px;background:#e4d4e6;"></div>
<div class="r" style="left:370px;top:379.32px;width:454px;height:0.9px;background:#e4d4e6;"></div>
<div class="r" style="left:370px;top:394.36px;width:454px;height:0.9px;background:#e4d4e6;"></div>
<div class="r" style="left:370px;top:409.40000000000003px;width:454px;height:0.9px;background:#e4d4e6;"></div>
<div class="r" style="left:370px;top:424.44px;width:454px;height:0.9px;background:#e4d4e6;"></div>
<div class="r" style="left:370px;top:439.47999999999996px;width:454px;height:0.9px;background:#e4d4e6;"></div>
<div class="r" style="left:370px;top:454.52px;width:454px;height:0.9px;background:#e4d4e6;"></div>
<div class="r" style="left:370px;top:469.56px;width:454px;height:0.9px;background:#e4d4e6;"></div>
<div class="r" style="left:370px;top:484.59999999999997px;width:454px;height:0.9px;background:#e4d4e6;"></div>
<div class="r" style="left:370px;top:499.64px;width:454px;height:0.9px;background:#e4d4e6;"></div>
<div class="r" style="left:370px;top:514.68px;width:454px;height:0.9px;background:#e4d4e6;"></div>
<div class="r" style="left:370px;top:529.7199999999999px;width:454px;height:0.9px;background:#e4d4e6;"></div>
<div class="r" style="left:370px;top:544.76px;width:454px;height:0.9px;background:#e4d4e6;"></div>
<div class="r" style="left:370px;top:559.8px;width:454px;height:0.9px;background:#e4d4e6;"></div>
<div class="r" style="left:370px;top:574.8399999999999px;width:454px;height:0.9px;background:#e4d4e6;"></div>
<div class="r" style="left:370px;top:589.8799999999999px;width:454px;height:0.9px;background:#e4d4e6;"></div>
<div class="r" style="left:370px;top:604.92px;width:454px;height:0.9px;background:#e4d4e6;"></div>
<div class="r" style="left:370px;top:169.5px;width:454px;height:15px;background:#d8c9d9;"></div>
<div class="r" style="left:370px;top:214.62px;width:454px;height:15px;background:#d8c9d9;"></div>
<div class="r" style="left:370px;top:229.66px;width:454px;height:15px;background:#d8c9d9;"></div>
<div class="r" style="left:370px;top:334.94px;width:454px;height:15px;background:#d8c9d9;"></div>
<div class="r" style="left:370px;top:455.26px;width:454px;height:15px;background:#d8c9d9;"></div>
<div class="r" style="left:492px;top:184.54px;width:1px;height:30px;background:#e4d4e6;"></div>
<div class="r" style="left:492px;top:244.7px;width:1px;height:90px;background:#e4d4e6;"></div>
<div class="r" style="left:492px;top:349.98px;width:1px;height:105px;background:#e4d4e6;"></div>
<div class="r" style="left:492px;top:470.29999999999995px;width:1px;height:135px;background:#e4d4e6;"></div>
<svg class="r" style="left:374px;top:170.5px" width="14" height="13" viewBox="0 0 14 13"><rect x="0.5" y="0.5" width="7" height="8" fill="#fff" stroke="#8a5aaa" stroke-width="1"/><rect x="3" y="2.5" width="7" height="8" fill="#fff" stroke="#8a5aaa" stroke-width="1"/><rect x="5.5" y="4.5" width="7.5" height="8" fill="#eadcf2" stroke="#6a3590" stroke-width="1.1"/></svg>
<div class="r" style="left:389px;top:170px;width:55px;height:14px;background:#7a6a9a;border:1px dashed #4a3a6a"></div>
<div class="t" style="transform:scaleX(0.892);left:391px;top:172.11px;font-size:10.5px;color:#fff;font-weight:bold;font-family:'Liberation Sans', sans-serif;-webkit-text-stroke:0;">Component</div>
<div class="r" style="left:379px;top:185px;width:1px;height:22px;background:repeating-linear-gradient(180deg,#999 0 2px,transparent 2px 4px);"></div>
<div class="r" style="left:380px;top:191.5px;width:9px;height:1px;background:repeating-linear-gradient(90deg,#999 0 2px,transparent 2px 4px);"></div>
<div class="r" style="left:380px;top:206.5px;width:24px;height:1px;background:repeating-linear-gradient(90deg,#999 0 2px,transparent 2px 4px);"></div>
<svg class="r" style="left:389px;top:186px" width="14" height="13" viewBox="0 0 14 13"><path d="M1.5 11.5l6.5-6.5" stroke="#909090" stroke-width="1.8" stroke-linecap="round"/><path d="M7 6a3.3 3.3 0 0 1 4.5-4.5l-2 2 1 1 2-2A3.3 3.3 0 0 1 8 7z" fill="none" stroke="#888" stroke-width="1"/></svg>
<div class="t" style="transform:scaleX(0.811);left:407.3px;top:187.11px;font-size:10.5px;color:#451a74;font-weight:normal;font-family:'Liberation Sans', sans-serif;">Handle</div>
<div class="t" style="transform:scaleX(0.810);left:497.3px;top:187.11px;font-size:10.5px;color:#451a74;font-weight:normal;font-family:'Liberation Sans', sans-serif;">RS232</div>
<div class="t" style="transform:scaleX(0.922);left:407.3px;top:202.11px;font-size:10.5px;color:#451a74;font-weight:normal;font-family:'Liberation Sans', sans-serif;">Type</div>
<div class="t" style="transform:scaleX(0.854);left:497.3px;top:202.11px;font-size:10.5px;color:#451a74;font-weight:normal;font-family:'Liberation Sans', sans-serif;">UART (RS232)</div>
<svg class="r" style="left:374px;top:215.5px" width="14" height="13" viewBox="0 0 14 13"><rect x="0.5" y="0.5" width="7" height="8" fill="#fff" stroke="#8a5aaa" stroke-width="1"/><rect x="3" y="2.5" width="7" height="8" fill="#fff" stroke="#8a5aaa" stroke-width="1"/><rect x="5.5" y="4.5" width="7.5" height="8" fill="#eadcf2" stroke="#6a3590" stroke-width="1.1"/></svg>
<div class="t" style="transform:scaleX(0.905);left:390px;top:217.11px;font-size:10.5px;color:#3c1a66;font-weight:bold;font-family:'Liberation Sans', sans-serif;-webkit-text-stroke:0;">Properties</div>
<svg class="r" style="left:376px;top:234px" width="8" height="8" viewBox="0 0 8 8"><rect x="0.5" y="0.5" width="7" height="7" fill="#f4f4f4" stroke="#a0a0a0" stroke-width="1"/><path d="M2 4h4" stroke="#3050a0" stroke-width="1"/></svg>
<div class="r" style="left:383px;top:237px;width:7px;height:1px;background:repeating-linear-gradient(90deg,#999 0 2px,transparent 2px 4px);"></div>
<svg class="r" style="left:390px;top:231px" width="13" height="12" viewBox="0 0 13 12"><rect x="0" y="0" width="13" height="12" fill="#9a72b8"/><rect x="0.5" y="0.5" width="12" height="11" fill="none" stroke="#6a3a8a"/><path d="M2.5 10l5.5-5.5" stroke="#eee" stroke-width="1.6" stroke-linecap="round"/><path d="M7.5 5a2.6 2.6 0 0 1 3.5-3.5l-1.5 1.5.8.8 1.5-1.5A2.6 2.6 0 0 1 8.3 5.8z" fill="#eee"/></svg>
<div class="t" style="transform:scaleX(0.857);left:407px;top:232.11px;font-size:10.5px;color:#451a74;font-weight:normal;font-family:'Liberation Sans', sans-serif;">Comms Settings</div>
<div class="r" style="left:379px;top:244px;width:1px;height:218px;background:repeating-linear-gradient(180deg,#999 0 2px,transparent 2px 4px);"></div>
<div class="r" style="left:396px;top:244px;width:1px;height:38px;background:repeating-linear-gradient(180deg,#999 0 2px,transparent 2px 4px);"></div>
<div class="r" style="left:396px;top:470px;width:1px;height:128px;background:repeating-linear-gradient(180deg,#999 0 2px,transparent 2px 4px);"></div>
<div class="r" style="left:397px;top:251.7px;width:9px;height:1px;background:repeating-linear-gradient(90deg,#999 0 2px,transparent 2px 4px);"></div>
<svg class="r" style="left:408px;top:246.2px" width="11" height="13" viewBox="0 0 11 13"><rect x="0.5" y="0.5" width="10" height="12" fill="#f8f4fa" stroke="#7b3f9b" stroke-width="1"/><path d="M1 2.2h9" stroke="#6aa0e0" stroke-width="1.3"/><path d="M2.5 4.7h6M2.5 6.9h6M2.5 9.1h6" stroke="#b08ac8" stroke-width="1.3"/></svg>
<div class="t" style="transform:scaleX(0.818);left:424px;top:247.31px;font-size:10.5px;color:#451a74;font-weight:normal;font-family:'Liberation Sans', sans-serif;">Channel</div>
<div class="t" style="transform:scaleX(0.836);left:497.3px;top:247.31px;font-size:10.5px;color:#451a74;font-weight:normal;font-family:'Liberation Sans', sans-serif;">Channel 1</div>
<div class="r" style="left:808px;top:245.2px;width:14px;height:14px;background:#f0f0f0;"></div>
<svg class="r" style="left:813px;top:251.2px" width="6" height="4" viewBox="0 0 6 4"><path d="M0 0h5.5l-2.75 3z" fill="#555"/></svg>
<div class="r" style="left:397px;top:266.74px;width:9px;height:1px;background:repeating-linear-gradient(90deg,#999 0 2px,transparent 2px 4px);"></div>
<svg class="r" style="left:408px;top:261.24px" width="11" height="13" viewBox="0 0 11 13"><rect x="0.5" y="0.5" width="10" height="12" fill="#f8f4fa" stroke="#7b3f9b" stroke-width="1"/><path d="M1 2.2h9" stroke="#6aa0e0" stroke-width="1.3"/><path d="M2.5 4.7h6M2.5 6.9h6M2.5 9.1h6" stroke="#b08ac8" stroke-width="1.3"/></svg>
<div class="t" style="transform:scaleX(0.855);left:424px;top:262.35px;font-size:10.5px;color:#451a74;font-weight:normal;font-family:'Liberation Sans', sans-serif;">Baud Options</div>
<div class="t" style="transform:scaleX(0.856);left:497.3px;top:262.35px;font-size:10.5px;color:#451a74;font-weight:normal;font-family:'Liberation Sans', sans-serif;">9600</div>
<div class="r" style="left:808px;top:260.24px;width:14px;height:14px;background:#f0f0f0;"></div>
<svg class="r" style="left:813px;top:266.24px" width="6" height="4" viewBox="0 0 6 4"><path d="M0 0h5.5l-2.75 3z" fill="#555"/></svg>
<div class="r" style="left:397px;top:281.78px;width:9px;height:1px;background:repeating-linear-gradient(90deg,#999 0 2px,transparent 2px 4px);"></div>
<svg class="r" style="left:408px;top:275.78px" width="14" height="13" viewBox="0 0 14 13"><text x="0" y="12" font-size="14.5" font-weight="bold" fill="#642c8c" font-family="Liberation Serif">Z</text></svg>
<div class="t" style="transform:scaleX(0.806);left:424px;top:277.39px;font-size:10.5px;color:#451a74;font-weight:normal;font-family:'Liberation Sans', sans-serif;">Baud Rate</div>
<div class="t" style="transform:scaleX(0.856);left:497.3px;top:277.39px;font-size:10.5px;color:#451a74;font-weight:normal;font-family:'Liberation Sans', sans-serif;">9600</div>
<div class="r" style="left:808px;top:290.32px;width:14px;height:14px;background:#f0f0f0;"></div>
<svg class="r" style="left:813px;top:296.32px" width="6" height="4" viewBox="0 0 6 4"><path d="M0 0h5.5l-2.75 3z" fill="#555"/></svg>
<div class="r" style="left:808px;top:305.36px;width:14px;height:14px;background:#f0f0f0;"></div>
<svg class="r" style="left:813px;top:311.36px" width="6" height="4" viewBox="0 0 6 4"><path d="M0 0h5.5l-2.75 3z" fill="#555"/></svg>
<div class="r" style="left:808px;top:320.4px;width:14px;height:14px;background:#f0f0f0;"></div>
<svg class="r" style="left:813px;top:326.4px" width="6" height="4" viewBox="0 0 6 4"><path d="M0 0h5.5l-2.75 3z" fill="#555"/></svg>
<div class="r" style="left:808px;top:350.48px;width:14px;height:14px;background:#f0f0f0;"></div>
<svg class="r" style="left:813px;top:356.48px" width="6" height="4" viewBox="0 0 6 4"><path d="M0 0h5.5l-2.75 3z" fill="#555"/></svg>
<div class="r" style="left:808px;top:380.56px;width:14px;height:14px;background:#f0f0f0;"></div>
<svg class="r" style="left:813px;top:386.56px" width="6" height="4" viewBox="0 0 6 4"><path d="M0 0h5.5l-2.75 3z" fill="#555"/></svg>
<div class="r" style="left:808px;top:395.6px;width:14px;height:14px;background:#f0f0f0;"></div>
<svg class="r" style="left:813px;top:401.6px" width="6" height="4" viewBox="0 0 6 4"><path d="M0 0h5.5l-2.75 3z" fill="#555"/></svg>
<div class="r" style="left:808px;top:425.67999999999995px;width:14px;height:14px;background:#f0f0f0;"></div>
<svg class="r" style="left:813px;top:431.67999999999995px" width="6" height="4" viewBox="0 0 6 4"><path d="M0 0h5.5l-2.75 3z" fill="#555"/></svg>
<div class="r" style="left:808px;top:440.71999999999997px;width:14px;height:14px;background:#f0f0f0;"></div>
<svg class="r" style="left:813px;top:446.71999999999997px" width="6" height="4" viewBox="0 0 6 4"><path d="M0 0h5.5l-2.75 3z" fill="#555"/></svg>
<div class="r" style="left:397px;top:477.29999999999995px;width:9px;height:1px;background:repeating-linear-gradient(90deg,#999 0 2px,transparent 2px 4px);"></div>
<svg class="r" style="left:408px;top:471.29999999999995px" width="12" height="13" viewBox="0 0 12 13"><text x="0.5" y="12" font-size="15" font-weight="bold" fill="#642c8c" font-family="Liberation Serif">S</text></svg>
<div class="t" style="transform:scaleX(0.825);left:424px;top:472.91px;font-size:10.5px;color:#451a74;font-weight:normal;font-family:'Liberation Sans', sans-serif;">Label</div>
<div class="t" style="transform:scaleX(0.810);left:497.3px;top:472.91px;font-size:10.5px;color:#451a74;font-weight:normal;font-family:'Liberation Sans', sans-serif;">RS232</div>
<div class="r" style="left:397px;top:492.34px;width:9px;height:1px;background:repeating-linear-gradient(90deg,#999 0 2px,transparent 2px 4px);"></div>
<svg class="r" style="left:407.5px;top:486.84px" width="12" height="12" viewBox="0 0 12 12"><circle cx="6" cy="6" r="5" fill="#fff" stroke="#5a2a80" stroke-width="1.6"/><path d="M6 1v10M1 6h10" stroke="#5a2a80" stroke-width="1.9"/></svg>
<div class="t" style="transform:scaleX(0.860);left:424px;top:487.95px;font-size:10.5px;color:#451a74;font-weight:normal;font-family:'Liberation Sans', sans-serif;">Scope Traces</div>
<div class="t" style="transform:scaleX(0.819);left:497.3px;top:487.95px;font-size:10.5px;color:#451a74;font-weight:normal;font-family:'Liberation Sans', sans-serif;">No</div>
<div class="r" style="left:808px;top:485.84px;width:14px;height:14px;background:#f0f0f0;"></div>
<svg class="r" style="left:813px;top:491.84px" width="6" height="4" viewBox="0 0 6 4"><path d="M0 0h5.5l-2.75 3z" fill="#555"/></svg>
<div class="r" style="left:397px;top:507.38px;width:9px;height:1px;background:repeating-linear-gradient(90deg,#999 0 2px,transparent 2px 4px);"></div>
<svg class="r" style="left:407.5px;top:501.88px" width="12" height="12" viewBox="0 0 12 12"><circle cx="6" cy="6" r="5" fill="#fff" stroke="#5a2a80" stroke-width="1.6"/><path d="M6 1v10M1 6h10" stroke="#5a2a80" stroke-width="1.9"/></svg>
<div class="t" style="transform:scaleX(0.849);left:424px;top:502.99px;font-size:10.5px;color:#451a74;font-weight:normal;font-family:'Liberation Sans', sans-serif;">Console Data</div>
<div class="t" style="transform:scaleX(0.922);left:497.3px;top:502.99px;font-size:10.5px;color:#451a74;font-weight:normal;font-family:'Liberation Sans', sans-serif;">Yes</div>
<div class="r" style="left:808px;top:500.88px;width:14px;height:14px;background:#f0f0f0;"></div>
<svg class="r" style="left:813px;top:506.88px" width="6" height="4" viewBox="0 0 6 4"><path d="M0 0h5.5l-2.75 3z" fill="#555"/></svg>
<div class="r" style="left:397px;top:522.42px;width:9px;height:1px;background:repeating-linear-gradient(90deg,#999 0 2px,transparent 2px 4px);"></div>
<svg class="r" style="left:408px;top:516.92px" width="11" height="13" viewBox="0 0 11 13"><rect x="0.5" y="0.5" width="10" height="12" fill="#f8f4fa" stroke="#7b3f9b" stroke-width="1"/><path d="M1 2.2h9" stroke="#6aa0e0" stroke-width="1.3"/><path d="M2.5 4.7h6M2.5 6.9h6M2.5 9.1h6" stroke="#b08ac8" stroke-width="1.3"/></svg>
<div class="t" style="transform:scaleX(0.857);left:424px;top:518.03px;font-size:10.5px;color:#451a74;font-weight:normal;font-family:'Liberation Sans', sans-serif;">Console Format</div>
<div class="t" style="transform:scaleX(0.856);left:497.3px;top:518.03px;font-size:10.5px;color:#451a74;font-weight:normal;font-family:'Liberation Sans', sans-serif;">Log</div>
<div class="r" style="left:808px;top:515.92px;width:14px;height:14px;background:#f0f0f0;"></div>
<svg class="r" style="left:813px;top:521.92px" width="6" height="4" viewBox="0 0 6 4"><path d="M0 0h5.5l-2.75 3z" fill="#555"/></svg>
<div class="r" style="left:397px;top:537.46px;width:9px;height:1px;background:repeating-linear-gradient(90deg,#999 0 2px,transparent 2px 4px);"></div>
<svg class="r" style="left:408px;top:531.46px" width="14" height="13" viewBox="0 0 14 13"><text x="0" y="12" font-size="14.5" font-weight="bold" fill="#642c8c" font-family="Liberation Serif">Z</text><path d="M10.5 0.5v5M8 3h5" stroke="#e02020" stroke-width="1.1"/></svg>
<div class="t" style="transform:scaleX(0.847);left:424px;top:533.07px;font-size:10.5px;color:#451a74;font-weight:normal;font-family:'Liberation Sans', sans-serif;">Console Colu...</div>
<div class="t" style="transform:scaleX(0.873);left:497.3px;top:533.07px;font-size:10.5px;color:#451a74;font-weight:normal;font-family:'Liberation Sans', sans-serif;">64</div>
<div class="r" style="left:397px;top:552.5px;width:9px;height:1px;background:repeating-linear-gradient(90deg,#999 0 2px,transparent 2px 4px);"></div>
<svg class="r" style="left:408px;top:547.0px" width="11" height="13" viewBox="0 0 11 13"><rect x="0.5" y="0.5" width="10" height="12" fill="#f8f4fa" stroke="#7b3f9b" stroke-width="1"/><path d="M1 2.2h9" stroke="#6aa0e0" stroke-width="1.3"/><path d="M2.5 4.7h6M2.5 6.9h6M2.5 9.1h6" stroke="#b08ac8" stroke-width="1.3"/></svg>
<div class="t" style="transform:scaleX(0.857);left:424px;top:548.11px;font-size:10.5px;color:#451a74;font-weight:normal;font-family:'Liberation Sans', sans-serif;">Data Source</div>
<div class="t" style="transform:scaleX(0.893);left:497.3px;top:548.11px;font-size:10.5px;color:#451a74;font-weight:normal;font-family:'Liberation Sans', sans-serif;">Data API</div>
<div class="r" style="left:808px;top:546.0px;width:14px;height:14px;background:#f0f0f0;"></div>
<svg class="r" style="left:813px;top:552.0px" width="6" height="4" viewBox="0 0 6 4"><path d="M0 0h5.5l-2.75 3z" fill="#555"/></svg>
<div class="r" style="left:397px;top:567.54px;width:9px;height:1px;background:repeating-linear-gradient(90deg,#999 0 2px,transparent 2px 4px);"></div>
<svg class="r" style="left:408px;top:562.04px" width="11" height="13" viewBox="0 0 11 13"><rect x="0.5" y="0.5" width="10" height="12" fill="#f8f4fa" stroke="#7b3f9b" stroke-width="1"/><path d="M1 2.2h9" stroke="#6aa0e0" stroke-width="1.3"/><path d="M2.5 4.7h6M2.5 6.9h6M2.5 9.1h6" stroke="#b08ac8" stroke-width="1.3"/></svg>
<div class="t" style="transform:scaleX(0.827);left:424px;top:563.15px;font-size:10.5px;color:#451a74;font-weight:normal;font-family:'Liberation Sans', sans-serif;">API</div>
<div class="t" style="transform:scaleX(0.888);left:497.3px;top:563.15px;font-size:10.5px;color:#451a74;font-weight:normal;font-family:'Liberation Sans', sans-serif;">InjectorHumanInterface1 UART CH0</div>
<div class="r" style="left:808px;top:561.04px;width:14px;height:14px;background:#f0f0f0;"></div>
<svg class="r" style="left:813px;top:567.04px" width="6" height="4" viewBox="0 0 6 4"><path d="M0 0h5.5l-2.75 3z" fill="#555"/></svg>
<div class="r" style="left:397px;top:582.5799999999999px;width:9px;height:1px;background:repeating-linear-gradient(90deg,#999 0 2px,transparent 2px 4px);"></div>
<svg class="r" style="left:407.5px;top:577.0799999999999px" width="12" height="12" viewBox="0 0 12 12"><circle cx="6" cy="6" r="5" fill="#fff" stroke="#5a2a80" stroke-width="1.6"/><path d="M6 1v10M1 6h10" stroke="#5a2a80" stroke-width="1.9"/></svg>
<div class="t" style="transform:scaleX(0.854);left:424px;top:578.19px;font-size:10.5px;color:#451a74;font-weight:normal;font-family:'Liberation Sans', sans-serif;">API Use DDR</div>
<div class="t" style="transform:scaleX(0.819);left:497.3px;top:578.19px;font-size:10.5px;color:#451a74;font-weight:normal;font-family:'Liberation Sans', sans-serif;">No</div>
<div class="r" style="left:808px;top:576.0799999999999px;width:14px;height:14px;background:#f0f0f0;"></div>
<svg class="r" style="left:813px;top:582.0799999999999px" width="6" height="4" viewBox="0 0 6 4"><path d="M0 0h5.5l-2.75 3z" fill="#555"/></svg>
<div class="r" style="left:397px;top:597.62px;width:9px;height:1px;background:repeating-linear-gradient(90deg,#999 0 2px,transparent 2px 4px);"></div>
<svg class="r" style="left:407.5px;top:592.12px" width="12" height="12" viewBox="0 0 12 12"><circle cx="6" cy="6" r="5" fill="#fff" stroke="#5a2a80" stroke-width="1.6"/><path d="M6 1v10M1 6h10" stroke="#5a2a80" stroke-width="1.9"/></svg>
<div class="t" style="transform:scaleX(0.880);left:424px;top:593.23px;font-size:10.5px;color:#451a74;font-weight:normal;font-family:'Liberation Sans', sans-serif;">API Use Flow...</div>
<div class="t" style="transform:scaleX(0.819);left:497.3px;top:593.23px;font-size:10.5px;color:#451a74;font-weight:normal;font-family:'Liberation Sans', sans-serif;">No</div>
<div class="r" style="left:808px;top:591.12px;width:14px;height:14px;background:#f0f0f0;"></div>
<svg class="r" style="left:813px;top:597.12px" width="6" height="4" viewBox="0 0 6 4"><path d="M0 0h5.5l-2.75 3z" fill="#555"/></svg>
<div class="r" style="left:825px;top:169px;width:13px;height:436px;background:#fff;"></div>
<div class="r" style="left:826px;top:183px;width:7.7px;height:395px;background:#e2d8e4;"></div>
<svg class="r" style="left:827px;top:174px" width="7" height="5" viewBox="0 0 7 5"><path d="M0 4h7l-3.5-4z" fill="#606060"/></svg>
<svg class="r" style="left:827px;top:597px" width="7" height="5" viewBox="0 0 7 5"><path d="M0 0h7l-3.5 4z" fill="#606060"/></svg>
<div class="r" style="left:836.5px;top:169px;width:1px;height:436px;background:#e8e4ea;"></div>
<div class="r" style="left:369px;top:605.5px;width:469px;height:25px;background:#fff;border-top:1.2px solid #8a8a8a;border-left:1.2px solid #8a8a8a;border-right:1.2px solid #8a8a8a"></div>
<div class="t" style="transform:scaleX(1.003);left:371.5px;top:609.29px;font-size:9.4px;color:#3a3070;font-weight:normal;font-family:'Liberation Mono', monospace;-webkit-text-stroke:0;">Name&nbsp;&nbsp;&nbsp;&nbsp;&nbsp;&nbsp;"Component"</div>
<div class="t" style="transform:scaleX(1.001);left:371.5px;top:619.29px;font-size:9.4px;color:#7a40a0;font-weight:normal;font-family:'Liberation Mono', monospace;-webkit-text-stroke:0;">Component RS232</div>
<div class="t" style="transform:scaleX(0.802);left:845px;top:113.11px;font-size:10.5px;color:#56208a;font-weight:normal;font-family:'Liberation Sans', sans-serif;">2D: Dashboard Panel</div>
<svg class="r" style="left:931px;top:117px" width="228" height="5" viewBox="0 0 228 5"><defs><pattern id="g3" width="5" height="5" patternUnits="userSpaceOnUse"><rect x="1" y="0" width="1" height="1" fill="#d8d8d8"/><rect x="3" y="0" width="1" height="1" fill="#a8a8a8"/><rect x="2" y="1" width="1" height="1" fill="#dcdcdc"/><rect x="4" y="1" width="1" height="1" fill="#e4e4e4"/><rect x="1" y="3" width="1" height="1" fill="#e0e0e0"/><rect x="3" y="3" width="1" height="1" fill="#b8b8b8"/></pattern></defs><rect width="228" height="5" fill="url(#g3)"/></svg>
<svg class="r" style="left:1163px;top:118px" width="7" height="4" viewBox="0 0 7 4"><path d="M0 0h7l-3.5 3.8z" fill="#555"/></svg>
<svg class="r" style="left:1179px;top:115px" width="7" height="9" viewBox="0 0 7 9"><path d="M2 0.5h3M2.5 0.5v5M4.5 0.5v5M0.5 5.5h6M3.5 5.5v3.5" stroke="#555" stroke-width="1" fill="none"/></svg>
<svg class="r" style="left:1193px;top:116px" width="7" height="7" viewBox="0 0 7 7"><path d="M0.5 0.5l6 6M6.5 0.5l-6 6" stroke="#555" stroke-width="1.1"/></svg>
<svg class="r" style="left:846px;top:129px" width="17" height="16" viewBox="0 0 17 16"><rect x="0.5" y="0.5" width="15.5" height="15" fill="#fff" stroke="#d4c0e0" stroke-width="1"/><text x="8.2" y="12" font-size="9.5" font-weight="bold" text-anchor="middle" fill="#c8aed8" font-family="Liberation Sans">2D</text></svg>
<div class="r" style="left:867px;top:129px;width:1px;height:15px;background:#e8e0ec;"></div>
<svg class="r" style="left:870.5px;top:128.5px" width="22" height="17" viewBox="0 0 22 17"><rect x="0.5" y="0.5" width="20.5" height="15.5" fill="#fff" stroke="#d4c4e6" stroke-width="1"/><path d="M1 16h20" stroke="#9a7ac0" stroke-width="1"/><path d="M6 2.5l10 6-10 5.5z" fill="#7b3f9b"/></svg>
<div class="r" style="left:895px;top:129px;width:1px;height:15px;background:#e8e0ec;"></div>
<svg class="r" style="left:898px;top:128.5px" width="22" height="17" viewBox="0 0 22 17"><rect x="0.5" y="0.5" width="21" height="15.5" fill="#fff" stroke="#c8b8e0" stroke-width="1"/><rect x="6.5" y="4" width="8.5" height="8.5" fill="#fff" stroke="#7b3f9b" stroke-width="1.1"/><path d="M10.75 0.8l-2.5 2.5h5zM10.75 16l-2.5-2.5h5zM2.5 8.25l3-2.5v5zM19 8.25l-3-2.5v5z" fill="#7b3f9b"/><rect x="7" y="11" width="7.5" height="1.5" fill="#c8a8d8"/></svg>
<svg class="r" style="left:921px;top:128.5px" width="20" height="17" viewBox="0 0 20 17"><circle cx="9.5" cy="8.5" r="3.3" fill="#7b3f9b"/><path d="M3 6.5A7 7 0 0 1 16 5.5M16 10.5A7 7 0 0 1 3 11.5" fill="none" stroke="#7b3f9b" stroke-width="1.3"/><path d="M14 4.5l4 0.5-1.5 3zM5 12.5l-4-.5 1.5-3z" fill="#7b3f9b"/></svg>
<svg class="r" style="left:942px;top:128.5px" width="19" height="17" viewBox="0 0 19 17"><rect x="3.5" y="0.8" width="14" height="13.5" fill="none" stroke="#7b3f9b" stroke-width="1.2"/><rect x="1" y="10.5" width="5.5" height="5.5" fill="#fff" stroke="#9a72b8" stroke-width="1"/><path d="M8 9l6-6M10 2.8h4.2v4.2" fill="none" stroke="#7b3f9b" stroke-width="1.3"/></svg>
<div class="r" style="left:965.5px;top:129px;width:1px;height:15px;background:#e8e0ec;"></div>
<svg class="r" style="left:968px;top:128.5px" width="22" height="17" viewBox="0 0 22 17"><rect x="0.5" y="0.5" width="21" height="15.5" fill="#fff" stroke="#c8b8e0" stroke-width="1"/><path d="M4 2.5h3v3h9v3h4v6H2.5z" fill="#7b3f9b"/><g fill="#fff"><rect x="5" y="7" width="2" height="1.5"/><rect x="8.5" y="7" width="2" height="1.5"/><rect x="12" y="7" width="2" height="1.5"/><rect x="5" y="10" width="2" height="1.5"/><rect x="8.5" y="10" width="2" height="1.5"/><rect x="12" y="10" width="2" height="1.5"/></g></svg>
<div class="r" style="left:993px;top:129px;width:1px;height:15px;background:#e8e0ec;"></div>
<svg class="r" style="left:998px;top:129px" width="18" height="17" viewBox="0 0 18 17"><path d="M1.5 15l8.5-8.5" stroke="#7b3f9b" stroke-width="2.6" stroke-linecap="round"/><path d="M8.5 7.5a4 4 0 0 1 5.5-5.5l-2.4 2.4 1.3 1.3 2.4-2.4a4 4 0 0 1-5.5 5.5z" fill="#7b3f9b"/><path d="M11 13h5l-2.5 3z" fill="#7b3f9b"/></svg>
<svg class="r" style="left:1020px;top:129px" width="18" height="17" viewBox="0 0 18 17"><path d="M6.5 9.5l9-8.5" stroke="#7b3f9b" stroke-width="2.6" stroke-linecap="round"/><path d="M5.2 8.6l2.6 2.6-1.2 1.2-2.6-2.6z" fill="#7b3f9b"/><path d="M4.6 10.6q1.6 1.2 1.4 2.6q-0.8 2.6-5 2.3q1.3-0.8 1.2-2.3q0-2 2.4-2.6z" fill="#7b3f9b"/><path d="M11 13h5l-2.5 3z" fill="#7b3f9b"/></svg>
<div class="r" style="left:842px;top:145.3px;width:352.5px;height:1.2px;background:#b4aac4;"></div>
<div class="r" style="left:842px;top:146px;width:352px;height:475px;background:#959595;"></div>
<div class="r" style="left:1193px;top:146px;width:1.2px;height:476px;background:#d0c4dc;"></div>
<div class="r" style="left:842px;top:620.5px;width:352px;height:1.2px;background:#d0c4dc;"></div>
<div class="r" style="left:935px;top:146px;width:1px;height:475px;background:#b4b4b4;"></div>
<div class="r" style="left:842px;top:363px;width:351px;height:1px;background:#b0b0b0;"></div>
<svg class="r" style="left:1195px;top:151px" width="5" height="5" viewBox="0 0 5 5"><path d="M0 4.5l5-4.5v4.5z" fill="#606060"/></svg>
<div class="r" style="left:1196.7px;top:354px;width:3.3px;height:65px;background:#e6dfe8;"></div>
<svg class="r" style="left:1194px;top:597px" width="6" height="5" viewBox="0 0 6 5"><path d="M0 0h6l-3 4z" fill="#606060"/></svg>
<svg class="r" style="left:846px;top:624px" width="5" height="6" viewBox="0 0 5 6"><path d="M4.5 0v6L0 3z" fill="#606060"/></svg>
<div class="r" style="left:1009px;top:623.5px;width:35px;height:6.5px;background:#e2d8e4;"></div>
<svg class="r" style="left:1185px;top:624px" width="5" height="6" viewBox="0 0 5 6"><path d="M0.5 0v6l4-3z" fill="#606060"/></svg>
<svg class="r" style="left:882px;top:252px" width="263" height="119" viewBox="0 0 263 119"><rect x="0" y="0" width="263" height="119" fill="#008c44"/><path d="M21.30 0h6.3v8q0 3-3.15 3t-3.15-3z" fill="#f2c232"/><circle cx="24.45" cy="8" r="1.9" fill="#101010"/><path d="M29.60 0h6.3v8q0 3-3.15 3t-3.15-3z" fill="#f2c232"/><circle cx="32.75" cy="8" r="1.9" fill="#101010"/><path d="M37.90 0h6.3v8q0 3-3.15 3t-3.15-3z" fill="#f2c232"/><circle cx="41.05" cy="8" r="1.9" fill="#101010"/><path d="M46.20 0h6.3v8q0 3-3.15 3t-3.15-3z" fill="#f2c232"/><circle cx="49.35" cy="8" r="1.9" fill="#101010"/><path d="M54.50 0h6.3v8q0 3-3.15 3t-3.15-3z" fill="#f2c232"/><circle cx="57.65" cy="8" r="1.9" fill="#101010"/><path d="M62.80 0h6.3v8q0 3-3.15 3t-3.15-3z" fill="#f2c232"/><circle cx="65.95" cy="8" r="1.9" fill="#101010"/><path d="M71.10 0h6.3v8q0 3-3.15 3t-3.15-3z" fill="#f2c232"/><circle cx="74.25" cy="8" r="1.9" fill="#101010"/><path d="M79.40 0h6.3v8q0 3-3.15 3t-3.15-3z" fill="#f2c232"/><circle cx="82.55" cy="8" r="1.9" fill="#101010"/><path d="M87.70 0h6.3v8q0 3-3.15 3t-3.15-3z" fill="#f2c232"/><circle cx="90.85" cy="8" r="1.9" fill="#101010"/><path d="M96.00 0h6.3v8q0 3-3.15 3t-3.15-3z" fill="#f2c232"/><circle cx="99.15" cy="8" r="1.9" fill="#101010"/><path d="M104.30 0h6.3v8q0 3-3.15 3t-3.15-3z" fill="#f2c232"/><circle cx="107.45" cy="8" r="1.9" fill="#101010"/><path d="M112.60 0h6.3v8q0 3-3.15 3t-3.15-3z" fill="#f2c232"/><circle cx="115.75" cy="8" r="1.9" fill="#101010"/><path d="M120.90 0h6.3v8q0 3-3.15 3t-3.15-3z" fill="#f2c232"/><circle cx="124.05" cy="8" r="1.9" fill="#101010"/><path d="M129.20 0h6.3v8q0 3-3.15 3t-3.15-3z" fill="#f2c232"/><circle cx="132.35" cy="8" r="1.9" fill="#101010"/><path d="M137.50 0h6.3v8q0 3-3.15 3t-3.15-3z" fill="#f2c232"/><circle cx="140.65" cy="8" r="1.9" fill="#101010"/><path d="M145.80 0h6.3v8q0 3-3.15 3t-3.15-3z" fill="#f2c232"/><circle cx="148.95" cy="8" r="1.9" fill="#101010"/><circle cx="8.3" cy="8.5" r="3.6" fill="#a4a4a4"/><circle cx="254" cy="8.5" r="3.6" fill="#a4a4a4"/><circle cx="8.3" cy="111" r="3.6" fill="#a4a4a4"/><circle cx="254" cy="111" r="3.6" fill="#a4a4a4"/><path d="M19 20h224v8h8v72h-8v9H19v-9h-8V28h8z" fill="#232323"/><rect x="21" y="21" width="220" height="4" fill="#1b1b1b"/><rect x="21" y="101" width="220" height="4" fill="#1b1b1b"/><rect x="26" y="42.4" width="210" height="43.4" rx="1" fill="#062206"/><rect x="28" y="45.2" width="206.7" height="38" fill="#5f7456"/><rect x="28.00" y="45.20" width="11.9" height="18.4" fill="#7f9a76"/><rect x="40.92" y="45.20" width="11.9" height="18.4" fill="#7f9a76"/><rect x="53.84" y="45.20" width="11.9" height="18.4" fill="#7f9a76"/><rect x="66.76" y="45.20" width="11.9" height="18.4" fill="#7f9a76"/><rect x="79.68" y="45.20" width="11.9" height="18.4" fill="#7f9a76"/><rect x="92.60" y="45.20" width="11.9" height="18.4" fill="#7f9a76"/><rect x="105.52" y="45.20" width="11.9" height="18.4" fill="#7f9a76"/><rect x="118.44" y="45.20" width="11.9" height="18.4" fill="#7f9a76"/><rect x="131.36" y="45.20" width="11.9" height="18.4" fill="#7f9a76"/><rect x="144.28" y="45.20" width="11.9" height="18.4" fill="#7f9a76"/><rect x="157.20" y="45.20" width="11.9" height="18.4" fill="#7f9a76"/><rect x="170.12" y="45.20" width="11.9" height="18.4" fill="#7f9a76"/><rect x="183.04" y="45.20" width="11.9" height="18.4" fill="#7f9a76"/><rect x="195.96" y="45.20" width="11.9" height="18.4" fill="#7f9a76"/><rect x="208.88" y="45.20" width="11.9" height="18.4" fill="#7f9a76"/><rect x="221.80" y="45.20" width="11.9" height="18.4" fill="#7f9a76"/><rect x="28.00" y="64.80" width="11.9" height="18.4" fill="#7f9a76"/><rect x="40.92" y="64.80" width="11.9" height="18.4" fill="#7f9a76"/><rect x="53.84" y="64.80" width="11.9" height="18.4" fill="#7f9a76"/><rect x="66.76" y="64.80" width="11.9" height="18.4" fill="#7f9a76"/><rect x="79.68" y="64.80" width="11.9" height="18.4" fill="#7f9a76"/><rect x="92.60" y="64.80" width="11.9" height="18.4" fill="#7f9a76"/><rect x="105.52" y="64.80" width="11.9" height="18.4" fill="#7f9a76"/><rect x="118.44" y="64.80" width="11.9" height="18.4" fill="#7f9a76"/><rect x="131.36" y="64.80" width="11.9" height="18.4" fill="#7f9a76"/><rect x="144.28" y="64.80" width="11.9" height="18.4" fill="#7f9a76"/><rect x="157.20" y="64.80" width="11.9" height="18.4" fill="#7f9a76"/><rect x="170.12" y="64.80" width="11.9" height="18.4" fill="#7f9a76"/><rect x="183.04" y="64.80" width="11.9" height="18.4" fill="#7f9a76"/><rect x="195.96" y="64.80" width="11.9" height="18.4" fill="#7f9a76"/><rect x="208.88" y="64.80" width="11.9" height="18.4" fill="#7f9a76"/><rect x="221.80" y="64.80" width="11.9" height="18.4" fill="#7f9a76"/></svg>
<svg class="r" style="left:879.5px;top:378.5px" width="127" height="131" viewBox="0 0 127 131"><rect x="0.5" y="0.5" width="125.3" height="130" fill="none" stroke="#40e8f0" stroke-width="1" stroke-dasharray="1.2 1.3"/></svg>
<div class="r" style="left:885px;top:391px;width:104.5px;height:105px;background:#1f1f1f;border:1.3px solid #cfcfcf;border-radius:3px"></div>
<div class="r" style="left:1004px;top:444px;width:21px;height:1px;background:#101010;"></div>
<div class="t" style="transform:scaleX(0.885);left:917px;top:436.03px;font-size:16.5px;color:#fff;font-weight:normal;font-family:'Liberation Sans', sans-serif;">UART</div>
<svg class="r" style="left:932px;top:410px" width="40" height="40" viewBox="0 0 40 40"><path d="M3 33.5V11H2l3.5-9.5L9 11H8v22.5z" fill="#3ae83a"/><path d="M6 31h22v-1.5l9 3.5-9 3.5V36H6z" fill="#f03a3a"/></svg>
<svg class="r" style="left:909.9px;top:379.2px" width="53.8" height="26.2" viewBox="0 0 53.8 26.2"><ellipse cx="26.9" cy="13.1" rx="25.9" ry="12.1" fill="#18a0c4" stroke="#d8d8d8" stroke-width="1"/><text x="26.9" y="16.412" font-size="9.2" text-anchor="middle" fill="#fff" font-family="Liberation Sans" textLength="42" lengthAdjust="spacingAndGlyphs">CONSOLE</text></svg>
<svg class="r" style="left:894.3000000000001px;top:481.8px" width="36.6" height="27.4" viewBox="0 0 36.6 27.4"><ellipse cx="18.3" cy="13.7" rx="17.3" ry="12.7" fill="#003a06" stroke="#d8d8d8" stroke-width="1"/><text x="18.3" y="17.119999999999997" font-size="9.5" text-anchor="middle" fill="#fff" font-family="Liberation Sans">TX</text></svg>
<svg class="r" style="left:943.1px;top:481.8px" width="36.6" height="27.4" viewBox="0 0 36.6 27.4"><ellipse cx="18.3" cy="13.7" rx="17.3" ry="12.7" fill="#3a0404" stroke="#d8d8d8" stroke-width="1"/><text x="18.3" y="17.119999999999997" font-size="9.5" text-anchor="middle" fill="#fff" font-family="Liberation Sans">RX</text></svg>
<svg class="r" style="left:976.8px;top:428.7px" width="29.0" height="29.0" viewBox="0 0 29.0 29.0"><defs><radialGradient id="sp4" cx="40%" cy="30%" r="75%"><stop offset="0" stop-color="#e0f2fb"/><stop offset=".45" stop-color="#8ccbe8"/><stop offset="1" stop-color="#2a86c0"/></radialGradient></defs><circle cx="14.5" cy="14.5" r="13.5" fill="url(#sp4)" stroke="#cfe4f0" stroke-width=".8"/><text x="14.5" y="16.5" font-size="9" font-weight="bold" text-anchor="middle" fill="#fff" font-family="Liberation Sans" textLength="25.0" lengthAdjust="spacingAndGlyphs">UART</text><text x="14.5" y="22.5" font-size="6" font-weight="bold" text-anchor="middle" fill="#fff" font-family="Liberation Sans">API</text></svg>
<div class="r" style="left:1040px;top:393px;width:100.5px;height:101.5px;background:#1f1f1f;border:1.3px solid #cfcfcf;border-radius:3px"></div>
<div class="t" style="transform:scaleX(0.933);left:1083.5px;top:426.30px;font-size:15px;color:#fff;font-weight:normal;font-family:'Liberation Sans', sans-serif;">HI</div>
<div class="t" style="transform:scaleX(1.045);left:1064.3px;top:447.30px;font-size:15px;color:#fff;font-weight:normal;font-family:'Liberation Sans', sans-serif;">Injector</div>
<svg class="r" style="left:1064.3px;top:380.5px" width="51.8" height="27.4" viewBox="0 0 51.8 27.4"><ellipse cx="25.9" cy="13.7" rx="24.9" ry="12.7" fill="#18a0c4" stroke="#d8d8d8" stroke-width="1"/><text x="25.9" y="17.012" font-size="9.2" text-anchor="middle" fill="#fff" font-family="Liberation Sans" textLength="40" lengthAdjust="spacingAndGlyphs">CONSOLE</text></svg>
<svg class="r" style="left:1048.5px;top:480.4px" width="35.0" height="26.6" viewBox="0 0 35.0 26.6"><ellipse cx="17.5" cy="13.3" rx="16.5" ry="12.3" fill="#003a06" stroke="#d8d8d8" stroke-width="1"/><text x="17.5" y="16.72" font-size="9.5" text-anchor="middle" fill="#fff" font-family="Liberation Sans">TX</text></svg>
<svg class="r" style="left:1096.2px;top:480.4px" width="35.0" height="26.6" viewBox="0 0 35.0 26.6"><ellipse cx="17.5" cy="13.3" rx="16.5" ry="12.3" fill="#3a0404" stroke="#d8d8d8" stroke-width="1"/><text x="17.5" y="16.72" font-size="9.5" text-anchor="middle" fill="#fff" font-family="Liberation Sans">RX</text></svg>
<svg class="r" style="left:1022.8000000000001px;top:429.3px" width="28.8" height="28.8" viewBox="0 0 28.8 28.8"><defs><radialGradient id="sp5" cx="40%" cy="30%" r="75%"><stop offset="0" stop-color="#e0f2fb"/><stop offset=".45" stop-color="#8ccbe8"/><stop offset="1" stop-color="#2a86c0"/></radialGradient></defs><circle cx="14.4" cy="14.4" r="13.4" fill="url(#sp5)" stroke="#cfe4f0" stroke-width=".8"/><text x="14.4" y="16.4" font-size="9" font-weight="bold" text-anchor="middle" fill="#fff" font-family="Liberation Sans" textLength="24.8" lengthAdjust="spacingAndGlyphs">UART</text><text x="14.4" y="22.4" font-size="6" font-weight="bold" text-anchor="middle" fill="#fff" font-family="Liberation Sans">API</text></svg>
<div class="r" style="left:51px;top:282px;width:743px;height:188.5px;background:#7b6a99;box-shadow:0 0 6px 2px rgba(0,0,0,.13)"></div>
<div class="r" style="left:54px;top:302.3px;width:737.7px;height:166.2px;background:#fff;"></div>
<div class="r" style="left:54px;top:302.3px;width:737.7px;height:1.2px;background:#8a8a8a;"></div>
<div class="t" style="transform:scaleX(0.777);left:54.7px;top:288.11px;font-size:10.5px;color:#f4f0f8;font-weight:normal;font-family:'Liberation Sans', sans-serif;">Consoles</div>
<svg class="r" style="left:95px;top:292px" width="685" height="5" viewBox="0 0 685 5"><defs><pattern id="cg" width="5" height="5" patternUnits="userSpaceOnUse"><rect x="1" y="0" width="1" height="1" fill="#8a7aa8"/><rect x="3" y="0" width="1" height="1" fill="#a898c0"/><rect x="2" y="1" width="1" height="1" fill="#8c7caa"/><rect x="4" y="1" width="1" height="1" fill="#8a7aa8"/><rect x="1" y="3" width="1" height="1" fill="#8a7aa8"/><rect x="3" y="3" width="1" height="1" fill="#a494bc"/></pattern></defs><rect width="685" height="5" fill="url(#cg)"/></svg>
<svg class="r" style="left:781.5px;top:289.5px" width="7" height="7" viewBox="0 0 7 7"><path d="M0.5 0.5l6 6M6.5 0.5l-6 6" stroke="#fff" stroke-width="1.2"/></svg>
<div class="r" style="left:55px;top:303.5px;width:361px;height:19px;background:#fff;"></div>
<div class="r" style="left:54px;top:322px;width:737.7px;height:1px;background:#e6d8e8;"></div>
<div class="r" style="left:99.5px;top:304px;width:1px;height:18.5px;background:#ecdfee;"></div>
<div class="r" style="left:206.3px;top:304px;width:1px;height:18.5px;background:#ecdfee;"></div>
<div class="r" style="left:257px;top:304px;width:1px;height:18.5px;background:#ecdfee;"></div>
<div class="r" style="left:416px;top:303.5px;width:128px;height:19.5px;background:#fff;border-left:1px solid #e6d8e8;border-right:1px solid #e6d8e8"></div>
<div class="r" style="left:417px;top:322px;width:126px;height:1.5px;background:#fff;"></div>
<div class="t" style="transform:scaleX(0.931);left:60.8px;top:306.11px;font-size:10.5px;color:#481a78;font-weight:normal;font-family:'Liberation Sans', sans-serif;">Default</div>
<div class="t" style="transform:scaleX(0.974);left:111.7px;top:306.11px;font-size:10.5px;color:#481a78;font-weight:normal;font-family:'Liberation Sans', sans-serif;">E-blocks2 Auto ID</div>
<div class="t" style="transform:scaleX(0.909);left:214.4px;top:306.11px;font-size:10.5px;color:#481a78;font-weight:normal;font-family:'Liberation Sans', sans-serif;">UART 1</div>
<div class="t" style="transform:scaleX(0.972);left:273.6px;top:306.11px;font-size:10.5px;color:#481a78;font-weight:normal;font-family:'Liberation Sans', sans-serif;">Human Interface RX Queue</div>
<div class="t" style="transform:scaleX(0.979);left:429.7px;top:306.11px;font-size:10.5px;color:#8070a4;font-weight:normal;font-family:'Liberation Sans', sans-serif;">Human Interface Data</div>
<div class="r" style="left:55px;top:328px;width:721.5px;height:111.5px;background:#fff;border-top:1.5px solid #666;border-left:1.5px solid #555;border-bottom:1px solid #ddd;border-right:1px solid #e4e4e4"></div>
<div class="r" style="left:57px;top:331px;width:1.3px;height:11px;background:#b0b020;"></div>
<svg class="r" style="left:780.5px;top:332.5px" width="7" height="5" viewBox="0 0 7 5"><path d="M0 4.5h7l-3.5-4z" fill="#b4b4b4"/></svg>
<svg class="r" style="left:780.5px;top:432.5px" width="7" height="5" viewBox="0 0 7 5"><path d="M0 0h7l-3.5 4z" fill="#b4b4b4"/></svg>
<svg class="r" style="left:59.5px;top:443.5px" width="5" height="7" viewBox="0 0 5 7"><path d="M4.5 0v7L0 3.5z" fill="#c0c0c0"/></svg>
<svg class="r" style="left:767.5px;top:443.5px" width="5" height="7" viewBox="0 0 5 7"><path d="M0.5 0v7l4-3.5z" fill="#c0c0c0"/></svg>
<svg class="r" style="left:54.5px;top:453.5px" width="14" height="14" viewBox="0 0 14 14"><rect x="0.5" y="0.5" width="13" height="13" fill="#f6f6f6" stroke="#e0e0e0"/><circle cx="7" cy="7" r="5.6" fill="#fff" stroke="#6a4a8a" stroke-width="1.4"/><text x="7" y="10.4" font-size="9" text-anchor="middle" fill="#6a4a8a" font-family="Liberation Sans">?</text></svg>
<div class="t" style="transform:scaleX(0.938);left:709px;top:455.65px;font-size:7.5px;color:#4e2379;font-weight:normal;font-family:'Liberation Sans', sans-serif;">(read-only)</div>
</body></html>
